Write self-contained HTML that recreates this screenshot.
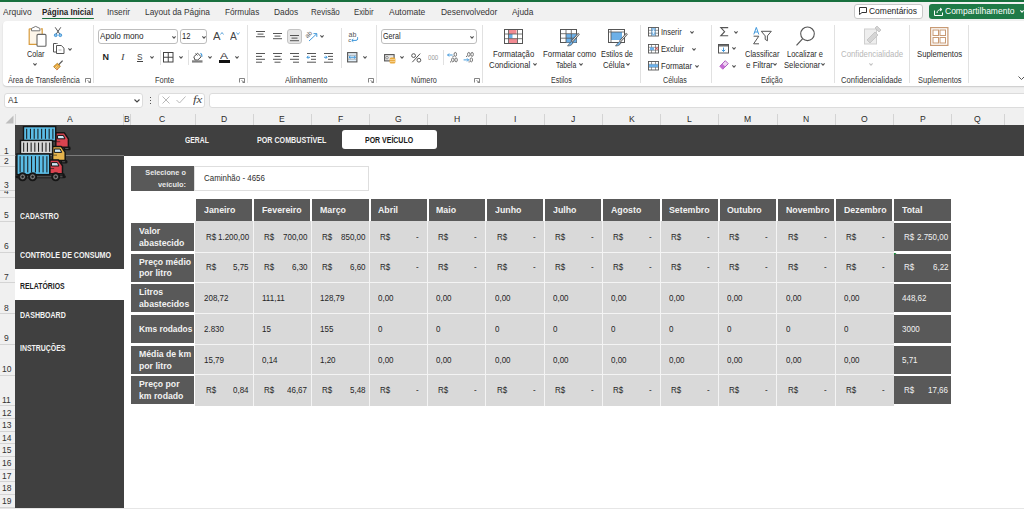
<!DOCTYPE html>
<html><head><meta charset="utf-8"><style>
html,body{margin:0;padding:0;}
body{width:1024px;height:509px;overflow:hidden;position:relative;background:#f1f1f1;font-family:"Liberation Sans",sans-serif;}
svg{overflow:visible}
</style></head><body>
<div style="position:absolute;left:0px;top:0px;width:1024px;height:2px;background:#18703e;"></div><div style="position:absolute;left:3.40px;top:7.50px;font-size:9px;line-height:9px;color:#363636;font-weight:normal;white-space:pre;transform:scaleX(0.9372);transform-origin:0 0;">Arquivo</div><div style="position:absolute;left:42.20px;top:7.50px;font-size:9px;line-height:9px;color:#242424;font-weight:bold;white-space:pre;transform:scaleX(0.8901);transform-origin:0 0;">Página Inicial</div><div style="position:absolute;left:106.70px;top:7.50px;font-size:9px;line-height:9px;color:#363636;font-weight:normal;white-space:pre;transform:scaleX(0.9198);transform-origin:0 0;">Inserir</div><div style="position:absolute;left:144.70px;top:7.50px;font-size:9px;line-height:9px;color:#363636;font-weight:normal;white-space:pre;transform:scaleX(0.9278);transform-origin:0 0;">Layout da Página</div><div style="position:absolute;left:225.20px;top:7.50px;font-size:9px;line-height:9px;color:#363636;font-weight:normal;white-space:pre;transform:scaleX(0.9145);transform-origin:0 0;">Fórmulas</div><div style="position:absolute;left:273.60px;top:7.50px;font-size:9px;line-height:9px;color:#363636;font-weight:normal;white-space:pre;transform:scaleX(0.9302);transform-origin:0 0;">Dados</div><div style="position:absolute;left:311.00px;top:7.50px;font-size:9px;line-height:9px;color:#363636;font-weight:normal;white-space:pre;transform:scaleX(0.8857);transform-origin:0 0;">Revisão</div><div style="position:absolute;left:353.90px;top:7.50px;font-size:9px;line-height:9px;color:#363636;font-weight:normal;white-space:pre;transform:scaleX(0.8665);transform-origin:0 0;">Exibir</div><div style="position:absolute;left:388.75px;top:7.50px;font-size:9px;line-height:9px;color:#363636;font-weight:normal;white-space:pre;transform:scaleX(0.9410);transform-origin:0 0;">Automate</div><div style="position:absolute;left:440.60px;top:7.50px;font-size:9px;line-height:9px;color:#363636;font-weight:normal;white-space:pre;transform:scaleX(0.9378);transform-origin:0 0;">Desenvolvedor</div><div style="position:absolute;left:511.60px;top:7.50px;font-size:9px;line-height:9px;color:#363636;font-weight:normal;white-space:pre;transform:scaleX(0.9297);transform-origin:0 0;">Ajuda</div><div style="position:absolute;left:42px;top:17.5px;width:52px;height:1.4px;background:#18703e;border-radius:1px"></div><div style="position:absolute;left:853.7px;top:3.5px;width:69.7px;height:15px;background:#ffffff;border:1px solid #c8c8c8;border-radius:3px;box-sizing:border-box"></div><div style="position:absolute;left:869.00px;top:6.70px;font-size:9px;line-height:9px;color:#242424;font-weight:normal;white-space:pre;transform:scaleX(0.9408);transform-origin:0 0;">Comentários</div><svg style="position:absolute;left:859px;top:7px" width="8" height="8" viewBox="0 0 8 8" fill="none"><path d="M0.5 0.5h7v5h-4.5l-2.5 2v-2h0z" stroke="#333" stroke-width="1"/></svg><div style="position:absolute;left:929.2px;top:3.5px;width:100px;height:15px;background:#1f7a47;border-radius:3px"></div><div style="position:absolute;left:945.00px;top:6.70px;font-size:9px;line-height:9px;color:#ffffff;font-weight:normal;white-space:pre;transform:scaleX(0.9451);transform-origin:0 0;">Compartilhamento</div><svg style="position:absolute;left:1019.5px;top:10px" width="4" height="2.5" viewBox="0 0 4 2.5" fill="none"><path d="M0.4 0.4l1.6 1.7l1.6-1.7" stroke="#fff" stroke-width="1.1"/></svg><svg style="position:absolute;left:933.6px;top:6.5px" width="9" height="9" viewBox="0 0 9 9" fill="none"><path d="M0.5 3.5v5h8v-3" stroke="#fff" stroke-width="1"/><path d="M3 6c0-2.5 2-3.5 4.5-3.5M6 1l2 1.5l-2 1.5" stroke="#fff" stroke-width="1"/></svg><div style="position:absolute;left:3px;top:21px;width:1024px;height:64.5px;background:#ffffff;border-radius:4px 0 0 4px;box-shadow:0 1px 1.5px rgba(0,0,0,0.16)"></div><div style="position:absolute;left:92.6px;top:24.5px;width:1px;height:58px;background:#e1e1e1;"></div><div style="position:absolute;left:246.7px;top:24.5px;width:1px;height:58px;background:#e1e1e1;"></div><div style="position:absolute;left:375.6px;top:24.5px;width:1px;height:58px;background:#e1e1e1;"></div><div style="position:absolute;left:481.7px;top:24.5px;width:1px;height:58px;background:#e1e1e1;"></div><div style="position:absolute;left:639.7px;top:24.5px;width:1px;height:58px;background:#e1e1e1;"></div><div style="position:absolute;left:710.5px;top:24.5px;width:1px;height:58px;background:#e1e1e1;"></div><div style="position:absolute;left:834px;top:24.5px;width:1px;height:58px;background:#e1e1e1;"></div><div style="position:absolute;left:909.2px;top:24.5px;width:1px;height:58px;background:#e1e1e1;"></div><div style="position:absolute;left:967.8px;top:24.5px;width:1px;height:58px;background:#e1e1e1;"></div><div style="position:absolute;left:7.70px;top:75.55px;font-size:8.5px;line-height:8.5px;color:#363636;font-weight:normal;white-space:pre;transform:scaleX(0.8582);transform-origin:0 0;">Área de Transferência</div><div style="position:absolute;left:155.30px;top:75.55px;font-size:8.5px;line-height:8.5px;color:#363636;font-weight:normal;white-space:pre;transform:scaleX(0.8787);transform-origin:0 0;">Fonte</div><div style="position:absolute;left:285.00px;top:75.55px;font-size:8.5px;line-height:8.5px;color:#363636;font-weight:normal;white-space:pre;transform:scaleX(0.8994);transform-origin:0 0;">Alinhamento</div><div style="position:absolute;left:411.00px;top:75.55px;font-size:8.5px;line-height:8.5px;color:#363636;font-weight:normal;white-space:pre;transform:scaleX(0.8567);transform-origin:0 0;">Número</div><div style="position:absolute;left:550.60px;top:75.55px;font-size:8.5px;line-height:8.5px;color:#363636;font-weight:normal;white-space:pre;transform:scaleX(0.8308);transform-origin:0 0;">Estilos</div><div style="position:absolute;left:662.80px;top:75.55px;font-size:8.5px;line-height:8.5px;color:#363636;font-weight:normal;white-space:pre;transform:scaleX(0.8396);transform-origin:0 0;">Células</div><div style="position:absolute;left:761.00px;top:75.55px;font-size:8.5px;line-height:8.5px;color:#363636;font-weight:normal;white-space:pre;transform:scaleX(0.8388);transform-origin:0 0;">Edição</div><div style="position:absolute;left:841.00px;top:75.55px;font-size:8.5px;line-height:8.5px;color:#363636;font-weight:normal;white-space:pre;transform:scaleX(0.9027);transform-origin:0 0;">Confidencialidade</div><div style="position:absolute;left:917.60px;top:75.55px;font-size:8.5px;line-height:8.5px;color:#363636;font-weight:normal;white-space:pre;transform:scaleX(0.8788);transform-origin:0 0;">Suplementos</div><svg style="position:absolute;left:27.5px;top:26.3px" width="19" height="21" viewBox="0 0 19 21" fill="none">
<path d="M1.2 2.8h2.8M12.8 2.8h1.4v15.6h-13v-15.6" stroke="#d89b3c" stroke-width="1.2" fill="#fdf6ea"/>
<path d="M3.5 4.8v-2.4l4.2-2l4.2 2v2.4z" fill="#fff" stroke="#777" stroke-width="1"/>
<rect x="9" y="8.4" width="9" height="11.8" rx="1" fill="#fff" stroke="#666" stroke-width="1.1"/>
</svg><div style="position:absolute;left:26.85px;top:50.30px;font-size:9px;line-height:9px;color:#2b2b2b;font-weight:normal;white-space:pre;transform:scaleX(0.8137);transform-origin:0 0;">Colar</div><svg style="position:absolute;left:33.1px;top:62.8px" width="4" height="2.5" viewBox="0 0 4 2.5" fill="none"><path d="M0.4 0.4l1.6 1.7l1.6-1.7" stroke="#555" stroke-width="1.1"/></svg><svg style="position:absolute;left:54.2px;top:26.6px" width="8" height="10" viewBox="0 0 8 10" fill="none"><path d="M1.2 0.3l4.6 6.8M6.8 0.3l-4.6 6.8" stroke="#555" stroke-width="1"/><circle cx="1.7" cy="8.2" r="1.4" fill="#8ec5ee" stroke="#3a8fd0" stroke-width="0.9"/><circle cx="6.3" cy="8.2" r="1.4" fill="#8ec5ee" stroke="#3a8fd0" stroke-width="0.9"/></svg><svg style="position:absolute;left:52.7px;top:42.9px" width="12" height="11" viewBox="0 0 12 11" fill="none"><path d="M3.5 0.5h-3v8.5h2.5" stroke="#555" stroke-width="1"/><path d="M3.5 0.5h1" stroke="#555" stroke-width="1"/><path d="M3.5 2.5h4.8l2.7 2.7v5.3h-7.5z" fill="#fff" stroke="#555" stroke-width="1"/><path d="M5.5 7h3" stroke="#999" stroke-width="0.7"/></svg><svg style="position:absolute;left:68px;top:47.599999999999994px" width="4" height="2.5" viewBox="0 0 4 2.5" fill="none"><path d="M0.4 0.4l1.6 1.7l1.6-1.7" stroke="#555" stroke-width="1.1"/></svg><svg style="position:absolute;left:53.2px;top:59.8px" width="11" height="10" viewBox="0 0 11 10" fill="none"><path d="M0.6 6.6l3.8-3.4l3 3.2l-3.6 3.4z" fill="#e9a93a" stroke="#b07a22" stroke-width="0.8"/><path d="M2 8l2.4-2.2M3.3 9l2.3-2.2" stroke="#fff" stroke-width="0.5"/><path d="M5.8 4.6l3.8-4" stroke="#555" stroke-width="1.3"/><circle cx="4.3" cy="9.2" r="0.5" fill="#e04050"/></svg><svg style="position:absolute;left:84.8px;top:77.5px" width="6" height="5" viewBox="0 0 6 5" fill="none"><path d="M0.5 4.5v-4h5v4h-2" stroke="#666" stroke-width="0.8"/><path d="M2.5 2.5l3 2" stroke="#666" stroke-width="0.8"/></svg><svg style="position:absolute;left:239.2px;top:77.5px" width="6" height="5" viewBox="0 0 6 5" fill="none"><path d="M0.5 4.5v-4h5v4h-2" stroke="#666" stroke-width="0.8"/><path d="M2.5 2.5l3 2" stroke="#666" stroke-width="0.8"/></svg><svg style="position:absolute;left:368px;top:77.5px" width="6" height="5" viewBox="0 0 6 5" fill="none"><path d="M0.5 4.5v-4h5v4h-2" stroke="#666" stroke-width="0.8"/><path d="M2.5 2.5l3 2" stroke="#666" stroke-width="0.8"/></svg><svg style="position:absolute;left:474.4px;top:77.5px" width="6" height="5" viewBox="0 0 6 5" fill="none"><path d="M0.5 4.5v-4h5v4h-2" stroke="#666" stroke-width="0.8"/><path d="M2.5 2.5l3 2" stroke="#666" stroke-width="0.8"/></svg><div style="position:absolute;left:98.1px;top:28.6px;width:80.2px;height:15.9px;background:#fff;border:1px solid #bdbdbd;border-radius:3px;box-sizing:border-box"></div><div style="position:absolute;left:99.90px;top:31.70px;font-size:9px;line-height:9px;color:#262626;font-weight:normal;white-space:pre;transform:scaleX(0.9077);transform-origin:0 0;">Apolo mono</div><svg style="position:absolute;left:172.4px;top:36.3px" width="4" height="2.5" viewBox="0 0 4 2.5" fill="none"><path d="M0.4 0.4l1.6 1.7l1.6-1.7" stroke="#555" stroke-width="1.1"/></svg><div style="position:absolute;left:180.3px;top:28.6px;width:27.2px;height:15.9px;background:#fff;border:1px solid #bdbdbd;border-radius:3px;box-sizing:border-box"></div><div style="position:absolute;left:181.80px;top:31.70px;font-size:9px;line-height:9px;color:#262626;font-weight:normal;white-space:pre;transform:scaleX(0.8491);transform-origin:0 0;">12</div><svg style="position:absolute;left:201.75px;top:36.3px" width="4" height="2.5" viewBox="0 0 4 2.5" fill="none"><path d="M0.4 0.4l1.6 1.7l1.6-1.7" stroke="#555" stroke-width="1.1"/></svg><div style="position:absolute;left:212.70px;top:30.90px;font-size:11px;line-height:11px;color:#444;font-weight:normal;white-space:pre;transform:scaleX(1.0222);transform-origin:0 0;">A</div><svg style="position:absolute;left:219.5px;top:32px" width="4" height="3" viewBox="0 0 4 3" fill="none"><path d="M0.5 2.5l1.5-2l1.5 2" stroke="#3a8fd0" stroke-width="0.8"/></svg><div style="position:absolute;left:229.80px;top:32.00px;font-size:10px;line-height:10px;color:#444;font-weight:normal;white-space:pre;transform:scaleX(1.0195);transform-origin:0 0;">A</div><svg style="position:absolute;left:236px;top:32px" width="4" height="3" viewBox="0 0 4 3" fill="none"><path d="M0.5 0.5l1.5 2l1.5-2" stroke="#3a8fd0" stroke-width="0.8"/></svg><div style="position:absolute;left:102.50px;top:52.70px;font-size:9px;line-height:9px;color:#262626;font-weight:bold;white-space:pre;">N</div><div style="position:absolute;left:121.25px;top:52.70px;font-size:9px;line-height:9px;color:#444;font-weight:normal;white-space:pre;transform:scaleX(1.1678);transform-origin:0 0;font-style:italic;font-family:Liberation Serif">I</div><div style="position:absolute;left:137.30px;top:52.55px;font-size:8.5px;line-height:8.5px;color:#444;font-weight:normal;white-space:pre;transform:scaleX(0.9701);transform-origin:0 0;">S</div><div style="position:absolute;left:137.3px;top:61px;width:5.5px;height:0.8px;background:#444;"></div><svg style="position:absolute;left:150.2px;top:56.3px" width="4" height="2.5" viewBox="0 0 4 2.5" fill="none"><path d="M0.4 0.4l1.6 1.7l1.6-1.7" stroke="#555" stroke-width="1.1"/></svg><div style="position:absolute;left:159.5px;top:49.7px;width:1px;height:15.6px;background:#e1e1e1;"></div><svg style="position:absolute;left:163.4px;top:52px" width="10.5" height="10.5" viewBox="0 0 10.5 10.5" fill="none"><rect x="0.5" y="0.5" width="9.5" height="9.5" stroke="#444" stroke-width="1"/><path d="M5.25 0.5v9.5M0.5 5.25h9.5" stroke="#444" stroke-width="1"/></svg><svg style="position:absolute;left:179px;top:56.3px" width="4" height="2.5" viewBox="0 0 4 2.5" fill="none"><path d="M0.4 0.4l1.6 1.7l1.6-1.7" stroke="#555" stroke-width="1.1"/></svg><div style="position:absolute;left:188.4px;top:49.7px;width:1px;height:15.6px;background:#e1e1e1;"></div><svg style="position:absolute;left:192.3px;top:52px" width="11" height="11" viewBox="0 0 11 11" fill="none"><path d="M1.8 4.8l3.8-3.6l3.6 3.6l-3.4 3.2h-2.8z" stroke="#444" stroke-width="0.95" stroke-linejoin="round"/><path d="M3.5 1.5l2 2" stroke="#444" stroke-width="0.9"/><path d="M8.6 1.2c0.9 0.8 1.6 2.2 1.3 3.5" stroke="#2f8fd8" stroke-width="1.1"/><rect x="0" y="8.3" width="10.5" height="2.3" fill="#808080"/></svg><svg style="position:absolute;left:207.5px;top:56.3px" width="4" height="2.5" viewBox="0 0 4 2.5" fill="none"><path d="M0.4 0.4l1.6 1.7l1.6-1.7" stroke="#555" stroke-width="1.1"/></svg><div style="position:absolute;left:220.00px;top:51.25px;font-size:9.5px;line-height:9.5px;color:#333;font-weight:normal;white-space:pre;transform:scaleX(1.2625);transform-origin:0 0;">A</div><div style="position:absolute;left:219.4px;top:60.3px;width:10.2px;height:2.3px;background:#111;"></div><svg style="position:absolute;left:234.6px;top:56.3px" width="4" height="2.5" viewBox="0 0 4 2.5" fill="none"><path d="M0.4 0.4l1.6 1.7l1.6-1.7" stroke="#555" stroke-width="1.1"/></svg><svg style="position:absolute;left:255.6px;top:31px" width="10" height="10" viewBox="0 0 10 10" fill="none"><rect x="0" y="0.0" width="9" height="1" fill="#555"/><rect x="1.5" y="2.6" width="6" height="1" fill="#555"/><rect x="0" y="5.2" width="9" height="1" fill="#555"/></svg><svg style="position:absolute;left:272.8px;top:33px" width="10" height="10" viewBox="0 0 10 10" fill="none"><rect x="0" y="0.0" width="9" height="1" fill="#555"/><rect x="1.5" y="2.6" width="6" height="1" fill="#555"/><rect x="0" y="5.2" width="9" height="1" fill="#555"/></svg><div style="position:absolute;left:286.6px;top:28.6px;width:15.1px;height:15.6px;background:#e6e6e6;border:1px solid #c4c4c4;border-radius:3px;box-sizing:border-box"></div><svg style="position:absolute;left:289.5px;top:35px" width="10" height="10" viewBox="0 0 10 10" fill="none"><rect x="0" y="0.0" width="9" height="1" fill="#555"/><rect x="1.5" y="2.6" width="6" height="1" fill="#555"/><rect x="0" y="5.2" width="9" height="1" fill="#555"/></svg><svg style="position:absolute;left:306px;top:30.5px" width="12" height="11" viewBox="0 0 12 11" fill="none"><text x="0" y="0" font-size="6.5" fill="#555" font-family="Liberation Sans" transform="translate(1.5,7.5) rotate(-45)">ab</text><path d="M3 10l7.5-7M7.5 2.6h3.3v3.3" stroke="#2f8fd8" stroke-width="0.9"/></svg><svg style="position:absolute;left:320.3px;top:35.3px" width="4" height="2.5" viewBox="0 0 4 2.5" fill="none"><path d="M0.4 0.4l1.6 1.7l1.6-1.7" stroke="#555" stroke-width="1.1"/></svg><svg style="position:absolute;left:255.6px;top:52.8px" width="10" height="10" viewBox="0 0 10 10" fill="none"><rect x="0" y="0.0" width="9" height="1" fill="#555"/><rect x="0" y="2.9" width="6" height="1" fill="#555"/><rect x="0" y="5.8" width="9" height="1" fill="#555"/><rect x="0" y="8.7" width="6" height="1" fill="#555"/></svg><svg style="position:absolute;left:272.8px;top:52.8px" width="10" height="10" viewBox="0 0 10 10" fill="none"><rect x="0" y="0.0" width="9" height="1" fill="#555"/><rect x="1.5" y="2.9" width="6" height="1" fill="#555"/><rect x="0" y="5.8" width="9" height="1" fill="#555"/><rect x="1.5" y="8.7" width="6" height="1" fill="#555"/></svg><svg style="position:absolute;left:289.7px;top:52.8px" width="10" height="10" viewBox="0 0 10 10" fill="none"><rect x="0" y="0.0" width="9" height="1" fill="#555"/><rect x="3" y="2.9" width="6" height="1" fill="#555"/><rect x="0" y="5.8" width="9" height="1" fill="#555"/><rect x="3" y="8.7" width="6" height="1" fill="#555"/></svg><svg style="position:absolute;left:306.9px;top:52.8px" width="10" height="10" viewBox="0 0 10 10" fill="none"><rect x="0" y="0" width="9" height="1" fill="#555"/><rect x="4" y="2.9" width="5" height="1" fill="#555"/><rect x="4" y="5.8" width="5" height="1" fill="#555"/><rect x="0" y="8.7" width="9" height="1" fill="#555"/><path d="M3 4.3h-3M1.3 2.8l-1.3 1.5l1.3 1.5" stroke="#2f8fd8" stroke-width="0.9"/></svg><svg style="position:absolute;left:323.6px;top:52.8px" width="10" height="10" viewBox="0 0 10 10" fill="none"><rect x="0" y="0" width="9" height="1" fill="#555"/><rect x="4" y="2.9" width="5" height="1" fill="#555"/><rect x="4" y="5.8" width="5" height="1" fill="#555"/><rect x="0" y="8.7" width="9" height="1" fill="#555"/><path d="M0 4.3h3M1.7 2.8l1.3 1.5l-1.3 1.5" stroke="#2f8fd8" stroke-width="0.9"/></svg><div style="position:absolute;left:340.8px;top:27.8px;width:1px;height:40.6px;background:#e1e1e1;"></div><svg style="position:absolute;left:348px;top:31.5px" width="11" height="11" viewBox="0 0 11 11" fill="none"><text x="0.5" y="5.2" font-size="7" fill="#555" font-family="Liberation Sans">ab</text><text x="0.3" y="9.6" font-size="6" fill="#555" font-family="Liberation Sans">c</text><path d="M9.6 5.2v1.6a1.6 1.6 0 0 1 -1.6 1.6h-4M5.3 7l-1.5 1.4l1.5 1.4" stroke="#2f8fd8" stroke-width="0.95"/></svg><svg style="position:absolute;left:347px;top:52px" width="10.5" height="10.5" viewBox="0 0 10.5 10.5" fill="none"><rect x="0.6" y="0.6" width="9.3" height="9.3" stroke="#555" stroke-width="1.1" fill="#e3f0fa"/><path d="M0.6 3.3h9.3M0.6 7.2h9.3" stroke="#888" stroke-width="0.6"/><path d="M2 5.25h6.5M3.4 4l-1.4 1.25l1.4 1.25M7.1 4l1.4 1.25l-1.4 1.25" stroke="#2f8fd8" stroke-width="0.9"/></svg><svg style="position:absolute;left:362.5px;top:56.3px" width="4" height="2.5" viewBox="0 0 4 2.5" fill="none"><path d="M0.4 0.4l1.6 1.7l1.6-1.7" stroke="#555" stroke-width="1.1"/></svg><div style="position:absolute;left:381.25px;top:28.6px;width:95.5px;height:15.9px;background:#fff;border:1px solid #bdbdbd;border-radius:3px;box-sizing:border-box"></div><div style="position:absolute;left:383.40px;top:31.70px;font-size:9px;line-height:9px;color:#262626;font-weight:normal;white-space:pre;transform:scaleX(0.7952);transform-origin:0 0;">Geral</div><svg style="position:absolute;left:470.3px;top:36.3px" width="4" height="2.5" viewBox="0 0 4 2.5" fill="none"><path d="M0.4 0.4l1.6 1.7l1.6-1.7" stroke="#555" stroke-width="1.1"/></svg><svg style="position:absolute;left:384px;top:53.6px" width="12" height="10" viewBox="0 0 12 10" fill="none"><rect x="0.6" y="0.6" width="9.5" height="6.3" stroke="#555" stroke-width="1.1" fill="#e8e8e8"/><circle cx="3" cy="3.7" r="1.3" stroke="#777" stroke-width="0.7"/><rect x="5.6" y="3.6" width="5.8" height="6" rx="1.5" fill="#e9a93a"/><path d="M6 5.6h5M6 7.6h5" stroke="#fbe3b8" stroke-width="0.7"/></svg><svg style="position:absolute;left:399.7px;top:56.3px" width="4" height="2.5" viewBox="0 0 4 2.5" fill="none"><path d="M0.4 0.4l1.6 1.7l1.6-1.7" stroke="#555" stroke-width="1.1"/></svg><svg style="position:absolute;left:411px;top:52.8px" width="10.5" height="9.8" viewBox="0 0 10.5 9.8" fill="none"><circle cx="2.6" cy="2.6" r="1.9" stroke="#555" stroke-width="1"/><circle cx="7.9" cy="7.2" r="1.9" stroke="#555" stroke-width="1"/><path d="M9.2 0.6L1.3 9.2" stroke="#555" stroke-width="1"/></svg><div style="position:absolute;left:427.80px;top:53.85px;font-size:7.5px;line-height:7.5px;color:#999;font-weight:normal;white-space:pre;transform:scaleX(0.8151);transform-origin:0 0;">000</div><div style="position:absolute;left:442.7px;top:50px;width:1px;height:15.3px;background:#e1e1e1;"></div><svg style="position:absolute;left:446.6px;top:52.3px" width="11" height="10.5" viewBox="0 0 11 10.5" fill="none"><ellipse cx="8.3" cy="2.4" rx="1.25" ry="2" stroke="#555" stroke-width="0.8"/><rect x="5.6" y="3.9" width="1" height="1" fill="#555"/><ellipse cx="5.8" cy="7.9" rx="1.25" ry="2" stroke="#555" stroke-width="0.8"/><ellipse cx="9.1" cy="7.9" rx="1.25" ry="2" stroke="#555" stroke-width="0.8"/><rect x="3.1" y="9.4" width="1" height="1" fill="#555"/><path d="M0.6 3h5M2.1 1.5l-1.5 1.5l1.5 1.5" stroke="#2f8fd8" stroke-width="0.9"/></svg><svg style="position:absolute;left:463.4px;top:52.3px" width="11" height="10.5" viewBox="0 0 11 10.5" fill="none"><ellipse cx="5.8" cy="2.4" rx="1.25" ry="2" stroke="#555" stroke-width="0.8"/><ellipse cx="9.1" cy="2.4" rx="1.25" ry="2" stroke="#555" stroke-width="0.8"/><rect x="3.1" y="3.9" width="1" height="1" fill="#555"/><ellipse cx="8.3" cy="7.9" rx="1.25" ry="2" stroke="#555" stroke-width="0.8"/><rect x="5.6" y="9.4" width="1" height="1" fill="#555"/><path d="M0.6 7.9h5M4.1 6.4l1.5 1.5l-1.5 1.5" stroke="#2f8fd8" stroke-width="0.9"/></svg><svg style="position:absolute;left:504px;top:28.6px" width="19" height="15" viewBox="0 0 19 15" fill="none">
<rect x="0.5" y="0.5" width="18" height="14" fill="#fff" stroke="#555" stroke-width="1"/>
<rect x="4.5" y="1" width="8" height="4" fill="#f28b93"/>
<rect x="4.5" y="5" width="4" height="4.5" fill="#6cb0e8"/>
<rect x="4.5" y="9.5" width="9" height="4.5" fill="#f28b93"/>
<path d="M4.5 0.5v14M13.5 0.5v14M0.5 5h18M0.5 9.7h18" stroke="#555" stroke-width="0.8"/>
</svg><div style="position:absolute;left:492.80px;top:49.70px;font-size:9px;line-height:9px;color:#2b2b2b;font-weight:normal;white-space:pre;transform:scaleX(0.8580);transform-origin:0 0;">Formatação</div><div style="position:absolute;left:489.00px;top:60.50px;font-size:9px;line-height:9px;color:#2b2b2b;font-weight:normal;white-space:pre;transform:scaleX(0.8782);transform-origin:0 0;">Condicional</div><svg style="position:absolute;left:532.7px;top:63.39999999999999px" width="4" height="2.5" viewBox="0 0 4 2.5" fill="none"><path d="M0.4 0.4l1.6 1.7l1.6-1.7" stroke="#555" stroke-width="1.1"/></svg><svg style="position:absolute;left:560px;top:28.6px" width="20" height="18" viewBox="0 0 20 18" fill="none">
<rect x="0.5" y="0.5" width="16" height="13" fill="#fff" stroke="#555" stroke-width="1"/>
<rect x="6" y="5" width="10.5" height="8.5" fill="#6cb0e8"/>
<path d="M0.5 4.7h16M0.5 9.2h16M6 0.5v13M11.3 0.5v13" stroke="#555" stroke-width="0.8"/>
<path d="M19 4.5l-7 8" stroke="#555" stroke-width="2.2"/><path d="M19 4.5l-7 8" stroke="#fff" stroke-width="0.9"/>
<path d="M11.5 12.5c-1.5 1-2.5 2.5-4 4.5c2.5 0 4.5-1 5.5-3z" fill="#6cb0e8" stroke="#555" stroke-width="0.7"/>
</svg><div style="position:absolute;left:542.80px;top:49.70px;font-size:9px;line-height:9px;color:#2b2b2b;font-weight:normal;white-space:pre;transform:scaleX(0.8719);transform-origin:0 0;">Formatar como</div><div style="position:absolute;left:555.80px;top:60.50px;font-size:9px;line-height:9px;color:#2b2b2b;font-weight:normal;white-space:pre;transform:scaleX(0.7617);transform-origin:0 0;">Tabela</div><svg style="position:absolute;left:578.8px;top:63.39999999999999px" width="4" height="2.5" viewBox="0 0 4 2.5" fill="none"><path d="M0.4 0.4l1.6 1.7l1.6-1.7" stroke="#555" stroke-width="1.1"/></svg><svg style="position:absolute;left:608px;top:28.6px" width="20" height="18" viewBox="0 0 20 18" fill="none">
<rect x="0.5" y="0.5" width="16" height="13" fill="#fff" stroke="#555" stroke-width="1"/>
<rect x="3" y="3" width="11" height="8" fill="#6cb0e8"/>
<path d="M0.5 3h16M3 0.5v13" stroke="#555" stroke-width="0.8"/>
<path d="M19 4.5l-7 8" stroke="#555" stroke-width="2.2"/><path d="M19 4.5l-7 8" stroke="#fff" stroke-width="0.9"/>
<path d="M11.5 12.5c-1.5 1-2.5 2.5-4 4.5c2.5 0 4.5-1 5.5-3z" fill="#6cb0e8" stroke="#555" stroke-width="0.7"/>
</svg><div style="position:absolute;left:601.00px;top:49.70px;font-size:9px;line-height:9px;color:#2b2b2b;font-weight:normal;white-space:pre;transform:scaleX(0.8150);transform-origin:0 0;">Estilos de</div><div style="position:absolute;left:602.70px;top:60.50px;font-size:9px;line-height:9px;color:#2b2b2b;font-weight:normal;white-space:pre;transform:scaleX(0.8544);transform-origin:0 0;">Célula</div><svg style="position:absolute;left:626px;top:63.39999999999999px" width="4" height="2.5" viewBox="0 0 4 2.5" fill="none"><path d="M0.4 0.4l1.6 1.7l1.6-1.7" stroke="#555" stroke-width="1.1"/></svg><svg style="position:absolute;left:647.5px;top:26.5px" width="11" height="10" viewBox="0 0 11 10" fill="none"><rect x="0.5" y="0.5" width="10" height="8.5" fill="#fff" stroke="#555" stroke-width="0.9"/><path d="M3.5 0.5v8.5M7.5 0.5v8.5M0.5 3.3h10M0.5 6.2h10" stroke="#555" stroke-width="0.6"/><rect x="3.5" y="1" width="4" height="7.5" fill="#6cb0e8" opacity="0.8"/><path d="M5.5 2.5v4.5M3.8 4.8h3.4" stroke="#fff" stroke-width="0.8"/></svg><div style="position:absolute;left:661.00px;top:27.70px;font-size:9px;line-height:9px;color:#2b2b2b;font-weight:normal;white-space:pre;transform:scaleX(0.8238);transform-origin:0 0;">Inserir</div><svg style="position:absolute;left:690px;top:30.8px" width="4" height="2.5" viewBox="0 0 4 2.5" fill="none"><path d="M0.4 0.4l1.6 1.7l1.6-1.7" stroke="#555" stroke-width="1.1"/></svg><svg style="position:absolute;left:647.5px;top:43.5px" width="11" height="10" viewBox="0 0 11 10" fill="none"><rect x="0.5" y="0.5" width="10" height="8.5" fill="#fff" stroke="#555" stroke-width="0.9"/><path d="M3.5 0.5v8.5M7.5 0.5v8.5M0.5 3.3h10M0.5 6.2h10" stroke="#555" stroke-width="0.6"/><rect x="2" y="3.3" width="4" height="2.9" fill="#6cb0e8"/><path d="M7.5 3.3l2.5 2.5M10 3.3l-2.5 2.5" stroke="#e03a3a" stroke-width="0.9"/></svg><div style="position:absolute;left:661.00px;top:44.90px;font-size:9px;line-height:9px;color:#2b2b2b;font-weight:normal;white-space:pre;transform:scaleX(0.8517);transform-origin:0 0;">Excluir</div><svg style="position:absolute;left:692px;top:47.8px" width="4" height="2.5" viewBox="0 0 4 2.5" fill="none"><path d="M0.4 0.4l1.6 1.7l1.6-1.7" stroke="#555" stroke-width="1.1"/></svg><svg style="position:absolute;left:647.5px;top:60.5px" width="11" height="10" viewBox="0 0 11 10" fill="none"><rect x="0.5" y="0.5" width="10" height="8.5" fill="#fff" stroke="#555" stroke-width="0.9"/><path d="M3.5 0.5v8.5M7.5 0.5v8.5M0.5 3.3h10M0.5 6.2h10" stroke="#555" stroke-width="0.6"/><rect x="1" y="3.3" width="9" height="2.9" fill="#6cb0e8"/></svg><div style="position:absolute;left:661.00px;top:61.80px;font-size:9px;line-height:9px;color:#2b2b2b;font-weight:normal;white-space:pre;transform:scaleX(0.8492);transform-origin:0 0;">Formatar</div><svg style="position:absolute;left:694.9px;top:64.6px" width="4" height="2.5" viewBox="0 0 4 2.5" fill="none"><path d="M0.4 0.4l1.6 1.7l1.6-1.7" stroke="#555" stroke-width="1.1"/></svg><svg style="position:absolute;left:719.6px;top:26.6px" width="8.5" height="9.5" viewBox="0 0 8.5 9.5" fill="none"><path d="M8.2 0.6H0.8L4.6 4.7L0.8 8.8H8.2" stroke="#555" stroke-width="1.1" stroke-linejoin="miter"/></svg><svg style="position:absolute;left:734px;top:30.8px" width="4" height="2.5" viewBox="0 0 4 2.5" fill="none"><path d="M0.4 0.4l1.6 1.7l1.6-1.7" stroke="#555" stroke-width="1.1"/></svg><svg style="position:absolute;left:718.1px;top:43.5px" width="11" height="9.5" viewBox="0 0 11 9.5" fill="none"><rect x="0.5" y="0.5" width="10" height="8.5" fill="#fff" stroke="#555" stroke-width="1"/><path d="M0.5 1.8h10" stroke="#555" stroke-width="1.3"/><path d="M5.5 3.5v4M3.8 5.8l1.7 1.7l1.7-1.7" stroke="#2f8fd8" stroke-width="0.9"/></svg><svg style="position:absolute;left:732.4px;top:47.3px" width="4" height="2.5" viewBox="0 0 4 2.5" fill="none"><path d="M0.4 0.4l1.6 1.7l1.6-1.7" stroke="#555" stroke-width="1.1"/></svg><svg style="position:absolute;left:718.6px;top:60.3px" width="10" height="10" viewBox="0 0 10 10" fill="none"><path d="M0.8 6.2l5.5-5.5l3 3l-5.5 5.5z" fill="#ecd3f0" stroke="#b05cc0" stroke-width="1"/><path d="M0.8 6.2l3 3l2.5-2.5l-3-3z" fill="#c46ad3"/></svg><svg style="position:absolute;left:732.4px;top:65.3px" width="4" height="2.5" viewBox="0 0 4 2.5" fill="none"><path d="M0.4 0.4l1.6 1.7l1.6-1.7" stroke="#555" stroke-width="1.1"/></svg><svg style="position:absolute;left:753px;top:27.4px" width="19" height="17.5" viewBox="0 0 19 17.5" fill="none">
<path d="M0.8 7.4L3.3 0.4L5.8 7.4M1.7 5h3.2" stroke="#2f8fd8" stroke-width="0.9"/>
<path d="M0.6 9.2H5.8L0.6 16.8H6" stroke="#555" stroke-width="1"/>
<path d="M8.3 4.3h10l-3.9 4.6v4.9l-2.2 -1.4v-3.5z" stroke="#555" stroke-width="1" fill="#fff" stroke-linejoin="round"/>
</svg><div style="position:absolute;left:744.80px;top:49.70px;font-size:9px;line-height:9px;color:#2b2b2b;font-weight:normal;white-space:pre;transform:scaleX(0.8288);transform-origin:0 0;">Classificar</div><div style="position:absolute;left:746.00px;top:60.50px;font-size:9px;line-height:9px;color:#2b2b2b;font-weight:normal;white-space:pre;transform:scaleX(0.8852);transform-origin:0 0;">e Filtrar</div><svg style="position:absolute;left:773.3px;top:63.39999999999999px" width="4" height="2.5" viewBox="0 0 4 2.5" fill="none"><path d="M0.4 0.4l1.6 1.7l1.6-1.7" stroke="#555" stroke-width="1.1"/></svg><svg style="position:absolute;left:795.6px;top:26.25px" width="20" height="20" viewBox="0 0 20 20" fill="none"><circle cx="11.5" cy="7.8" r="6.8" stroke="#555" stroke-width="1.1" fill="#fff"/><path d="M6.5 12.8l-6 6.5" stroke="#555" stroke-width="1.2"/></svg><div style="position:absolute;left:787.00px;top:49.70px;font-size:9px;line-height:9px;color:#2b2b2b;font-weight:normal;white-space:pre;transform:scaleX(0.8271);transform-origin:0 0;">Localizar e</div><div style="position:absolute;left:784.00px;top:60.50px;font-size:9px;line-height:9px;color:#2b2b2b;font-weight:normal;white-space:pre;transform:scaleX(0.8536);transform-origin:0 0;">Selecionar</div><svg style="position:absolute;left:821.4px;top:63.39999999999999px" width="4" height="2.5" viewBox="0 0 4 2.5" fill="none"><path d="M0.4 0.4l1.6 1.7l1.6-1.7" stroke="#555" stroke-width="1.1"/></svg><svg style="position:absolute;left:864.4px;top:26px" width="18" height="19" viewBox="0 0 18 19" fill="none">
<rect x="0.5" y="3" width="12" height="15" fill="#eeeeee" stroke="#cfcfcf" stroke-width="1"/>
<path d="M3 14l8-8l3 3l-8 8z" fill="#d5d5d5" stroke="#c0c0c0" stroke-width="0.8"/>
<path d="M11 2l4 4l2-2l-4-4z" fill="#d5d5d5" stroke="#c0c0c0" stroke-width="0.8"/>
</svg><div style="position:absolute;left:840.60px;top:49.70px;font-size:9px;line-height:9px;color:#b8b8b8;font-weight:normal;white-space:pre;transform:scaleX(0.8679);transform-origin:0 0;">Confidencialidade</div><svg style="position:absolute;left:869px;top:62.55px" width="4" height="2.5" viewBox="0 0 4 2.5" fill="none"><path d="M0.4 0.4l1.6 1.7l1.6-1.7" stroke="#c4c4c4" stroke-width="1.1"/></svg><svg style="position:absolute;left:930.3px;top:26.6px" width="18.5" height="19" viewBox="0 0 18.5 19" fill="none">
<rect x="0.6" y="0.6" width="17.3" height="17.8" fill="#fff" stroke="#c89a74" stroke-width="1.2"/>
<rect x="3" y="3" width="5.5" height="5.5" stroke="#c89a74" stroke-width="1"/>
<rect x="10" y="3" width="5.5" height="5.5" stroke="#c89a74" stroke-width="1"/>
<rect x="3" y="10.5" width="5.5" height="5.5" stroke="#c89a74" stroke-width="1"/>
<rect x="10" y="10.5" width="5.5" height="5.5" stroke="#c89a74" stroke-width="1"/>
</svg><div style="position:absolute;left:916.80px;top:49.70px;font-size:9px;line-height:9px;color:#2b2b2b;font-weight:normal;white-space:pre;transform:scaleX(0.8585);transform-origin:0 0;">Suplementos</div><svg style="position:absolute;left:1018px;top:76px" width="6" height="4" viewBox="0 0 6 4" fill="none"><path d="M0.5 0.5l3 3l3-3" stroke="#555" stroke-width="1"/></svg><div style="position:absolute;left:4px;top:92.5px;width:139px;height:15.3px;background:#fff;border:1px solid #dcdcdc;border-radius:3px;box-sizing:border-box"></div><div style="position:absolute;left:7.90px;top:95.75px;font-size:8.5px;line-height:8.5px;color:#333;font-weight:normal;white-space:pre;transform:scaleX(0.9618);transform-origin:0 0;">A1</div><svg style="position:absolute;left:133.5px;top:99px" width="6" height="3.5" viewBox="0 0 6 3.5" fill="none"><path d="M0.5 0.5l2.5 2.5l2.5-2.5" stroke="#444" stroke-width="1.1"/></svg><div style="position:absolute;left:150.1px;top:96.5px;width:1.2px;height:1.2px;background:#555;"></div><div style="position:absolute;left:150.1px;top:99.5px;width:1.2px;height:1.2px;background:#555;"></div><div style="position:absolute;left:150.1px;top:102.5px;width:1.2px;height:1.2px;background:#555;"></div><div style="position:absolute;left:157.75px;top:92.5px;width:46.75px;height:15.3px;background:#fff;border:1px solid #dcdcdc;border-radius:3px;box-sizing:border-box"></div><svg style="position:absolute;left:161.8px;top:96px" width="8" height="8" viewBox="0 0 8 8" fill="none"><path d="M0.5 0.5l7 7M7.5 0.5l-7 7" stroke="#b8b8b8" stroke-width="1"/></svg><svg style="position:absolute;left:176.4px;top:96px" width="10" height="8" viewBox="0 0 10 8" fill="none"><path d="M0.5 4l3 3l6-6.5" stroke="#b8b8b8" stroke-width="1"/></svg><div style="position:absolute;left:192.80px;top:95.00px;font-size:10px;line-height:10px;color:#444;font-weight:normal;white-space:pre;transform:scaleX(1.3025);transform-origin:0 0;font-family:Liberation Serif;font-style:italic">fx</div><div style="position:absolute;left:209px;top:92.5px;width:820px;height:15.3px;background:#fff;border:1px solid #dcdcdc;border-radius:3px 0 0 3px;box-sizing:border-box"></div><div style="position:absolute;left:0px;top:108px;width:1024px;height:17.2px;background:#f0f0f0;"></div><div style="position:absolute;left:0px;top:125.2px;width:15px;height:384px;background:#f0f0f0;"></div><svg style="position:absolute;left:5px;top:114.5px" width="9" height="9" viewBox="0 0 9 9" fill="none"><path d="M8.5 0.5v8h-8z" fill="#bdbdbd"/></svg><div style="position:absolute;left:15px;top:125.2px;width:1009px;height:383px;background:#ffffff;"></div><div style="position:absolute;left:66.63px;top:114.65px;font-size:9.3px;line-height:9.3px;color:#2b2b2b;font-weight:normal;white-space:pre;transform:scaleX(0.9244);transform-origin:0 0;">A</div><div style="position:absolute;left:123.2px;top:113.7px;width:1px;height:11.5px;background:#d4d4d4;"></div><div style="position:absolute;left:123.98px;top:114.65px;font-size:9.3px;line-height:9.3px;color:#2b2b2b;font-weight:normal;white-space:pre;transform:scaleX(0.9244);transform-origin:0 0;">B</div><div style="position:absolute;left:129.5px;top:113.7px;width:1px;height:11.5px;background:#d4d4d4;"></div><div style="position:absolute;left:159.10px;top:114.65px;font-size:9.3px;line-height:9.3px;color:#2b2b2b;font-weight:normal;white-space:pre;transform:scaleX(0.9244);transform-origin:0 0;">C</div><div style="position:absolute;left:194.5px;top:113.7px;width:1px;height:11.5px;background:#d4d4d4;"></div><div style="position:absolute;left:220.90px;top:114.65px;font-size:9.3px;line-height:9.3px;color:#2b2b2b;font-weight:normal;white-space:pre;transform:scaleX(0.9244);transform-origin:0 0;">D</div><div style="position:absolute;left:252.70000000000002px;top:113.7px;width:1px;height:11.5px;background:#d4d4d4;"></div><div style="position:absolute;left:279.33px;top:114.65px;font-size:9.3px;line-height:9.3px;color:#2b2b2b;font-weight:normal;white-space:pre;transform:scaleX(0.9244);transform-origin:0 0;">E</div><div style="position:absolute;left:310.9px;top:113.7px;width:1px;height:11.5px;background:#d4d4d4;"></div><div style="position:absolute;left:337.78px;top:114.65px;font-size:9.3px;line-height:9.3px;color:#2b2b2b;font-weight:normal;white-space:pre;transform:scaleX(0.9244);transform-origin:0 0;">F</div><div style="position:absolute;left:369.1px;top:113.7px;width:1px;height:11.5px;background:#d4d4d4;"></div><div style="position:absolute;left:395.26px;top:114.65px;font-size:9.3px;line-height:9.3px;color:#2b2b2b;font-weight:normal;white-space:pre;transform:scaleX(0.9244);transform-origin:0 0;">G</div><div style="position:absolute;left:427.29999999999995px;top:113.7px;width:1px;height:11.5px;background:#d4d4d4;"></div><div style="position:absolute;left:453.70px;top:114.65px;font-size:9.3px;line-height:9.3px;color:#2b2b2b;font-weight:normal;white-space:pre;transform:scaleX(0.9244);transform-origin:0 0;">H</div><div style="position:absolute;left:485.5px;top:113.7px;width:1px;height:11.5px;background:#d4d4d4;"></div><div style="position:absolute;left:513.81px;top:114.65px;font-size:9.3px;line-height:9.3px;color:#2b2b2b;font-weight:normal;white-space:pre;transform:scaleX(0.9244);transform-origin:0 0;">I</div><div style="position:absolute;left:543.7px;top:113.7px;width:1px;height:11.5px;background:#d4d4d4;"></div><div style="position:absolute;left:571.05px;top:114.65px;font-size:9.3px;line-height:9.3px;color:#2b2b2b;font-weight:normal;white-space:pre;transform:scaleX(0.9244);transform-origin:0 0;">J</div><div style="position:absolute;left:601.9px;top:113.7px;width:1px;height:11.5px;background:#d4d4d4;"></div><div style="position:absolute;left:628.53px;top:114.65px;font-size:9.3px;line-height:9.3px;color:#2b2b2b;font-weight:normal;white-space:pre;transform:scaleX(0.9244);transform-origin:0 0;">K</div><div style="position:absolute;left:660.1px;top:113.7px;width:1px;height:11.5px;background:#d4d4d4;"></div><div style="position:absolute;left:687.21px;top:114.65px;font-size:9.3px;line-height:9.3px;color:#2b2b2b;font-weight:normal;white-space:pre;transform:scaleX(0.9244);transform-origin:0 0;">L</div><div style="position:absolute;left:718.3000000000001px;top:113.7px;width:1px;height:11.5px;background:#d4d4d4;"></div><div style="position:absolute;left:744.22px;top:114.65px;font-size:9.3px;line-height:9.3px;color:#2b2b2b;font-weight:normal;white-space:pre;transform:scaleX(0.9244);transform-origin:0 0;">M</div><div style="position:absolute;left:776.5px;top:113.7px;width:1px;height:11.5px;background:#d4d4d4;"></div><div style="position:absolute;left:802.90px;top:114.65px;font-size:9.3px;line-height:9.3px;color:#2b2b2b;font-weight:normal;white-space:pre;transform:scaleX(0.9244);transform-origin:0 0;">N</div><div style="position:absolute;left:834.7px;top:113.7px;width:1px;height:11.5px;background:#d4d4d4;"></div><div style="position:absolute;left:860.86px;top:114.65px;font-size:9.3px;line-height:9.3px;color:#2b2b2b;font-weight:normal;white-space:pre;transform:scaleX(0.9244);transform-origin:0 0;">O</div><div style="position:absolute;left:892.9000000000001px;top:113.7px;width:1px;height:11.5px;background:#d4d4d4;"></div><div style="position:absolute;left:919.53px;top:114.65px;font-size:9.3px;line-height:9.3px;color:#2b2b2b;font-weight:normal;white-space:pre;transform:scaleX(0.9244);transform-origin:0 0;">P</div><div style="position:absolute;left:951.1px;top:113.7px;width:1px;height:11.5px;background:#d4d4d4;"></div><div style="position:absolute;left:974.46px;top:114.65px;font-size:9.3px;line-height:9.3px;color:#2b2b2b;font-weight:normal;white-space:pre;transform:scaleX(0.9244);transform-origin:0 0;">Q</div><div style="position:absolute;left:1003.6999999999999px;top:113.7px;width:1px;height:11.5px;background:#d4d4d4;"></div><div style="position:absolute;left:15px;top:113.7px;width:1px;height:11.5px;background:#d4d4d4;"></div><div style="position:absolute;left:0;top:125.2px;width:15px;height:30.299999999999997px;overflow:hidden"><div style="position:absolute;left:4.34px;top:22.10px;font-size:9px;line-height:9px;color:#333;font-weight:normal;white-space:pre;transform:scaleX(0.9444);transform-origin:0 0;">1</div></div><div style="position:absolute;left:0px;top:155.0px;width:15px;height:1px;background:#d4d4d4;"></div><div style="position:absolute;left:0;top:155.5px;width:15px;height:10.800000000000011px;overflow:hidden"><div style="position:absolute;left:4.34px;top:1.80px;font-size:9px;line-height:9px;color:#333;font-weight:normal;white-space:pre;transform:scaleX(0.9444);transform-origin:0 0;">2</div></div><div style="position:absolute;left:0px;top:165.8px;width:15px;height:1px;background:#d4d4d4;"></div><div style="position:absolute;left:0;top:166.3px;width:15px;height:24.5px;overflow:hidden"><div style="position:absolute;left:4.34px;top:14.50px;font-size:9px;line-height:9px;color:#333;font-weight:normal;white-space:pre;transform:scaleX(0.9444);transform-origin:0 0;">3</div></div><div style="position:absolute;left:0px;top:190.3px;width:15px;height:1px;background:#d4d4d4;"></div><div style="position:absolute;left:0;top:190.8px;width:15px;height:6.199999999999989px;overflow:hidden"><div style="position:absolute;left:4.34px;top:-3.80px;font-size:9px;line-height:9px;color:#333;font-weight:normal;white-space:pre;transform:scaleX(0.9444);transform-origin:0 0;">4</div></div><div style="position:absolute;left:0px;top:196.5px;width:15px;height:1px;background:#d4d4d4;"></div><div style="position:absolute;left:0;top:197.0px;width:15px;height:24.30000000000001px;overflow:hidden"><div style="position:absolute;left:4.34px;top:14.30px;font-size:9px;line-height:9px;color:#333;font-weight:normal;white-space:pre;transform:scaleX(0.9444);transform-origin:0 0;">5</div></div><div style="position:absolute;left:0px;top:220.8px;width:15px;height:1px;background:#d4d4d4;"></div><div style="position:absolute;left:0;top:221.3px;width:15px;height:30.899999999999977px;overflow:hidden"><div style="position:absolute;left:4.34px;top:20.90px;font-size:9px;line-height:9px;color:#333;font-weight:normal;white-space:pre;transform:scaleX(0.9444);transform-origin:0 0;">6</div></div><div style="position:absolute;left:0px;top:251.7px;width:15px;height:1px;background:#d4d4d4;"></div><div style="position:absolute;left:0;top:252.2px;width:15px;height:30.69999999999999px;overflow:hidden"><div style="position:absolute;left:4.34px;top:20.70px;font-size:9px;line-height:9px;color:#333;font-weight:normal;white-space:pre;transform:scaleX(0.9444);transform-origin:0 0;">7</div></div><div style="position:absolute;left:0px;top:282.4px;width:15px;height:1px;background:#d4d4d4;"></div><div style="position:absolute;left:0;top:282.9px;width:15px;height:30.900000000000034px;overflow:hidden"><div style="position:absolute;left:4.34px;top:20.90px;font-size:9px;line-height:9px;color:#333;font-weight:normal;white-space:pre;transform:scaleX(0.9444);transform-origin:0 0;">8</div></div><div style="position:absolute;left:0px;top:313.3px;width:15px;height:1px;background:#d4d4d4;"></div><div style="position:absolute;left:0;top:313.8px;width:15px;height:30.69999999999999px;overflow:hidden"><div style="position:absolute;left:4.34px;top:20.70px;font-size:9px;line-height:9px;color:#333;font-weight:normal;white-space:pre;transform:scaleX(0.9444);transform-origin:0 0;">9</div></div><div style="position:absolute;left:0px;top:344.0px;width:15px;height:1px;background:#d4d4d4;"></div><div style="position:absolute;left:0;top:344.5px;width:15px;height:30.5px;overflow:hidden"><div style="position:absolute;left:1.97px;top:20.50px;font-size:9px;line-height:9px;color:#333;font-weight:normal;white-space:pre;transform:scaleX(0.9444);transform-origin:0 0;">10</div></div><div style="position:absolute;left:0px;top:374.5px;width:15px;height:1px;background:#d4d4d4;"></div><div style="position:absolute;left:0;top:375.0px;width:15px;height:30.80000000000001px;overflow:hidden"><div style="position:absolute;left:2.29px;top:20.80px;font-size:9px;line-height:9px;color:#333;font-weight:normal;white-space:pre;transform:scaleX(0.9444);transform-origin:0 0;">11</div></div><div style="position:absolute;left:0px;top:405.3px;width:15px;height:1px;background:#d4d4d4;"></div><div style="position:absolute;left:0;top:405.8px;width:15px;height:12.800000000000011px;overflow:hidden"><div style="position:absolute;left:1.97px;top:2.80px;font-size:9px;line-height:9px;color:#333;font-weight:normal;white-space:pre;transform:scaleX(0.9444);transform-origin:0 0;">12</div></div><div style="position:absolute;left:0px;top:418.1px;width:15px;height:1px;background:#d4d4d4;"></div><div style="position:absolute;left:0;top:418.6px;width:15px;height:12.699999999999989px;overflow:hidden"><div style="position:absolute;left:1.97px;top:2.70px;font-size:9px;line-height:9px;color:#333;font-weight:normal;white-space:pre;transform:scaleX(0.9444);transform-origin:0 0;">13</div></div><div style="position:absolute;left:0px;top:430.8px;width:15px;height:1px;background:#d4d4d4;"></div><div style="position:absolute;left:0;top:431.3px;width:15px;height:12.5px;overflow:hidden"><div style="position:absolute;left:1.97px;top:2.50px;font-size:9px;line-height:9px;color:#333;font-weight:normal;white-space:pre;transform:scaleX(0.9444);transform-origin:0 0;">14</div></div><div style="position:absolute;left:0px;top:443.3px;width:15px;height:1px;background:#d4d4d4;"></div><div style="position:absolute;left:0;top:443.8px;width:15px;height:12.5px;overflow:hidden"><div style="position:absolute;left:1.97px;top:2.50px;font-size:9px;line-height:9px;color:#333;font-weight:normal;white-space:pre;transform:scaleX(0.9444);transform-origin:0 0;">15</div></div><div style="position:absolute;left:0px;top:455.8px;width:15px;height:1px;background:#d4d4d4;"></div><div style="position:absolute;left:0;top:456.3px;width:15px;height:12.699999999999989px;overflow:hidden"><div style="position:absolute;left:1.97px;top:2.70px;font-size:9px;line-height:9px;color:#333;font-weight:normal;white-space:pre;transform:scaleX(0.9444);transform-origin:0 0;">16</div></div><div style="position:absolute;left:0px;top:468.5px;width:15px;height:1px;background:#d4d4d4;"></div><div style="position:absolute;left:0;top:469.0px;width:15px;height:12.600000000000023px;overflow:hidden"><div style="position:absolute;left:1.97px;top:2.60px;font-size:9px;line-height:9px;color:#333;font-weight:normal;white-space:pre;transform:scaleX(0.9444);transform-origin:0 0;">17</div></div><div style="position:absolute;left:0px;top:481.1px;width:15px;height:1px;background:#d4d4d4;"></div><div style="position:absolute;left:0;top:481.6px;width:15px;height:12.699999999999989px;overflow:hidden"><div style="position:absolute;left:1.97px;top:2.70px;font-size:9px;line-height:9px;color:#333;font-weight:normal;white-space:pre;transform:scaleX(0.9444);transform-origin:0 0;">18</div></div><div style="position:absolute;left:0px;top:493.8px;width:15px;height:1px;background:#d4d4d4;"></div><div style="position:absolute;left:0;top:494.3px;width:15px;height:12.699999999999989px;overflow:hidden"><div style="position:absolute;left:1.97px;top:2.70px;font-size:9px;line-height:9px;color:#333;font-weight:normal;white-space:pre;transform:scaleX(0.9444);transform-origin:0 0;">19</div></div><div style="position:absolute;left:0px;top:506.5px;width:15px;height:1px;background:#d4d4d4;"></div><div style="position:absolute;left:14.5px;top:125.2px;width:1px;height:384px;background:#d0d0d0;"></div><div style="position:absolute;left:15px;top:125.2px;width:1009px;height:30.5px;background:#404040;"></div><div style="position:absolute;left:15px;top:155.5px;width:108.7px;height:352.5px;background:#404040;"></div><div style="position:absolute;left:15px;top:155.2px;width:108.7px;height:0.8px;background:#7a7a7a;"></div><div style="position:absolute;left:15px;top:268.5px;width:108.7px;height:31px;background:#ffffff;"></div><div style="position:absolute;left:0px;top:507.6px;width:1024px;height:1.4px;background:#e6e6e6;"></div><div style="position:absolute;left:20.10px;top:212.15px;font-size:8.5px;line-height:8.5px;color:#f2f2f2;font-weight:bold;white-space:pre;transform:scaleX(0.8056);transform-origin:0 0;">CADASTRO</div><div style="position:absolute;left:20.10px;top:250.65px;font-size:8.5px;line-height:8.5px;color:#f2f2f2;font-weight:bold;white-space:pre;transform:scaleX(0.8388);transform-origin:0 0;">CONTROLE DE CONSUMO</div><div style="position:absolute;left:20.10px;top:281.85px;font-size:8.5px;line-height:8.5px;color:#1e1e1e;font-weight:bold;white-space:pre;transform:scaleX(0.8096);transform-origin:0 0;">RELATÓRIOS</div><div style="position:absolute;left:20.10px;top:310.65px;font-size:8.5px;line-height:8.5px;color:#f2f2f2;font-weight:bold;white-space:pre;transform:scaleX(0.8290);transform-origin:0 0;">DASHBOARD</div><div style="position:absolute;left:20.10px;top:343.85px;font-size:8.5px;line-height:8.5px;color:#f2f2f2;font-weight:bold;white-space:pre;transform:scaleX(0.8165);transform-origin:0 0;">INSTRUÇÕES</div><div style="position:absolute;left:185.00px;top:136.50px;font-size:8.2px;line-height:8.2px;color:#f2f2f2;font-weight:bold;white-space:pre;transform:scaleX(0.8305);transform-origin:0 0;">GERAL</div><div style="position:absolute;left:257.00px;top:136.50px;font-size:8.2px;line-height:8.2px;color:#f2f2f2;font-weight:bold;white-space:pre;transform:scaleX(0.8718);transform-origin:0 0;">POR COMBUSTÍVEL</div><div style="position:absolute;left:341.7px;top:130.2px;width:94.9px;height:19.1px;background:#ffffff;border-radius:3px"></div><div style="position:absolute;left:364.90px;top:136.50px;font-size:8.2px;line-height:8.2px;color:#1a1a1a;font-weight:bold;white-space:pre;transform:scaleX(0.8527);transform-origin:0 0;">POR VEÍCULO</div><svg style="position:absolute;left:14px;top:124px" width="60" height="58" viewBox="14 124 60 58" fill="none"><rect x="63.86" y="146.60" width="6.74" height="3.6" rx="1.3" fill="#151515"/><path d="M65.25 148.40h3.15" stroke="#777" stroke-width="0.8"/><path d="M55.8 132.8 H64.37 L68.40 138.85 V147.2 H55.8 Z" fill="#d9434f" stroke="#151515" stroke-width="1.5" stroke-linejoin="round"/><path d="M57.56 135.40 H63.36 L64.87 138.80 H57.56 Z" fill="#cfe8f5" stroke="#151515" stroke-width="1" stroke-linejoin="round"/><path d="M56.40 141.73 h3.78" stroke="#151515" stroke-width="0.9" opacity="0.7"/><rect x="23.5" y="126.6" width="32.2" height="14.4" fill="#5bbde6" stroke="#151515" stroke-width="1.4"/><path d="M26.70 128.79999999999998 v10.0" stroke="#151515" stroke-width="1.0"/><path d="M30.44 128.79999999999998 v10.0" stroke="#151515" stroke-width="1.0"/><path d="M34.19 128.79999999999998 v10.0" stroke="#151515" stroke-width="1.0"/><path d="M37.93 128.79999999999998 v10.0" stroke="#151515" stroke-width="1.0"/><path d="M41.67 128.79999999999998 v10.0" stroke="#151515" stroke-width="1.0"/><path d="M45.41 128.79999999999998 v10.0" stroke="#151515" stroke-width="1.0"/><path d="M49.16 128.79999999999998 v10.0" stroke="#151515" stroke-width="1.0"/><path d="M52.90 128.79999999999998 v10.0" stroke="#151515" stroke-width="1.0"/><rect x="60.66" y="159.90" width="6.74" height="3.6" rx="1.3" fill="#151515"/><path d="M62.05 161.70h3.15" stroke="#777" stroke-width="0.8"/><path d="M52.6 146.4 H61.17 L65.20 152.32 V160.5 H52.6 Z" fill="#e7b54d" stroke="#151515" stroke-width="1.5" stroke-linejoin="round"/><path d="M54.36 149.00 H60.16 L61.67 152.40 H54.36 Z" fill="#cfe8f5" stroke="#151515" stroke-width="1" stroke-linejoin="round"/><path d="M53.20 155.14 h3.78" stroke="#151515" stroke-width="0.9" opacity="0.7"/><rect x="20.5" y="140.4" width="32" height="13.6" fill="#d6d6d6" stroke="#151515" stroke-width="1.4"/><path d="M23.70 142.6 v9.2" stroke="#151515" stroke-width="1.0"/><path d="M27.41 142.6 v9.2" stroke="#151515" stroke-width="1.0"/><path d="M31.13 142.6 v9.2" stroke="#151515" stroke-width="1.0"/><path d="M34.84 142.6 v9.2" stroke="#151515" stroke-width="1.0"/><path d="M38.56 142.6 v9.2" stroke="#151515" stroke-width="1.0"/><path d="M42.27 142.6 v9.2" stroke="#151515" stroke-width="1.0"/><path d="M45.99 142.6 v9.2" stroke="#151515" stroke-width="1.0"/><path d="M49.70 142.6 v9.2" stroke="#151515" stroke-width="1.0"/><rect x="57.89" y="173.20" width="6.81" height="3.6" rx="1.3" fill="#151515"/><path d="M59.30 175.00h3.20" stroke="#777" stroke-width="0.8"/><path d="M49.7 160 H58.40 L62.50 165.80 V173.8 H49.7 Z" fill="#d9434f" stroke="#151515" stroke-width="1.5" stroke-linejoin="round"/><path d="M51.49 162.60 H57.38 L58.92 166.00 H51.49 Z" fill="#cfe8f5" stroke="#151515" stroke-width="1" stroke-linejoin="round"/><path d="M50.30 168.56 h3.84" stroke="#151515" stroke-width="0.9" opacity="0.7"/><rect x="16.9" y="154" width="32.8" height="20.6" fill="#5bbde6" stroke="#151515" stroke-width="1.4"/><path d="M20.10 156.2 v16.200000000000003" stroke="#151515" stroke-width="1.0"/><path d="M23.93 156.2 v16.200000000000003" stroke="#151515" stroke-width="1.0"/><path d="M27.76 156.2 v16.200000000000003" stroke="#151515" stroke-width="1.0"/><path d="M31.59 156.2 v16.200000000000003" stroke="#151515" stroke-width="1.0"/><path d="M35.41 156.2 v16.200000000000003" stroke="#151515" stroke-width="1.0"/><path d="M39.24 156.2 v16.200000000000003" stroke="#151515" stroke-width="1.0"/><path d="M43.07 156.2 v16.200000000000003" stroke="#151515" stroke-width="1.0"/><path d="M46.90 156.2 v16.200000000000003" stroke="#151515" stroke-width="1.0"/><path d="M17 176.8h47.5" stroke="#151515" stroke-width="2.8" stroke-linecap="round"/><path d="M18.5 176.8h44" stroke="#6d6d6d" stroke-width="0.9"/><circle cx="22.6" cy="176.8" r="3.7" fill="#333" stroke="#151515" stroke-width="1.6"/><circle cx="22.6" cy="176.8" r="1.9" fill="none" stroke="#8d8d8d" stroke-width="0.9"/><circle cx="22.6" cy="176.8" r="0.7" fill="#151515"/><circle cx="32.6" cy="176.8" r="3.7" fill="#333" stroke="#151515" stroke-width="1.6"/><circle cx="32.6" cy="176.8" r="1.9" fill="none" stroke="#8d8d8d" stroke-width="0.9"/><circle cx="32.6" cy="176.8" r="0.7" fill="#151515"/><circle cx="55.7" cy="176.8" r="3.7" fill="#333" stroke="#151515" stroke-width="1.6"/><circle cx="55.7" cy="176.8" r="1.9" fill="none" stroke="#8d8d8d" stroke-width="0.9"/><circle cx="55.7" cy="176.8" r="0.7" fill="#151515"/></svg><div style="position:absolute;left:130.8px;top:166.3px;width:63.2px;height:24.7px;background:#595959;"></div><div style="position:absolute;left:145.30px;top:169.25px;font-size:7.3px;line-height:7.3px;color:#e8e8e8;font-weight:bold;white-space:pre;">Selecione o</div><div style="position:absolute;left:158.00px;top:180.95px;font-size:7.3px;line-height:7.3px;color:#e8e8e8;font-weight:bold;white-space:pre;transform:scaleX(1.0155);transform-origin:0 0;">veículo:</div><div style="position:absolute;left:194px;top:166.3px;width:175.4px;height:24.7px;background:#fff;border:1px solid #dedede;box-sizing:border-box"></div><div style="position:absolute;left:203.70px;top:174.00px;font-size:8.8px;line-height:8.8px;color:#2e2e2e;font-weight:normal;white-space:pre;transform:scaleX(0.9024);transform-origin:0 0;">Caminhão - 4656</div><div style="position:absolute;left:195.9px;top:198.9px;width:56.4px;height:21.8px;background:#595959;"></div><div style="position:absolute;left:203.60px;top:204.55px;font-size:9.5px;line-height:9.5px;color:#f2f2f2;font-weight:bold;white-space:pre;transform:scaleX(0.9260);transform-origin:0 0;">Janeiro</div><div style="position:absolute;left:254.10000000000002px;top:198.9px;width:56.4px;height:21.8px;background:#595959;"></div><div style="position:absolute;left:261.80px;top:204.55px;font-size:9.5px;line-height:9.5px;color:#f2f2f2;font-weight:bold;white-space:pre;transform:scaleX(0.9260);transform-origin:0 0;">Fevereiro</div><div style="position:absolute;left:312.3px;top:198.9px;width:56.4px;height:21.8px;background:#595959;"></div><div style="position:absolute;left:320.00px;top:204.55px;font-size:9.5px;line-height:9.5px;color:#f2f2f2;font-weight:bold;white-space:pre;transform:scaleX(0.9260);transform-origin:0 0;">Março</div><div style="position:absolute;left:370.50000000000006px;top:198.9px;width:56.4px;height:21.8px;background:#595959;"></div><div style="position:absolute;left:378.20px;top:204.55px;font-size:9.5px;line-height:9.5px;color:#f2f2f2;font-weight:bold;white-space:pre;transform:scaleX(0.9260);transform-origin:0 0;">Abril</div><div style="position:absolute;left:428.7px;top:198.9px;width:56.4px;height:21.8px;background:#595959;"></div><div style="position:absolute;left:436.40px;top:204.55px;font-size:9.5px;line-height:9.5px;color:#f2f2f2;font-weight:bold;white-space:pre;transform:scaleX(0.9260);transform-origin:0 0;">Maio</div><div style="position:absolute;left:486.90000000000003px;top:198.9px;width:56.4px;height:21.8px;background:#595959;"></div><div style="position:absolute;left:494.60px;top:204.55px;font-size:9.5px;line-height:9.5px;color:#f2f2f2;font-weight:bold;white-space:pre;transform:scaleX(0.9260);transform-origin:0 0;">Junho</div><div style="position:absolute;left:545.1px;top:198.9px;width:56.4px;height:21.8px;background:#595959;"></div><div style="position:absolute;left:552.80px;top:204.55px;font-size:9.5px;line-height:9.5px;color:#f2f2f2;font-weight:bold;white-space:pre;transform:scaleX(0.9260);transform-origin:0 0;">Julho</div><div style="position:absolute;left:603.3px;top:198.9px;width:56.4px;height:21.8px;background:#595959;"></div><div style="position:absolute;left:611.00px;top:204.55px;font-size:9.5px;line-height:9.5px;color:#f2f2f2;font-weight:bold;white-space:pre;transform:scaleX(0.9260);transform-origin:0 0;">Agosto</div><div style="position:absolute;left:661.5px;top:198.9px;width:56.4px;height:21.8px;background:#595959;"></div><div style="position:absolute;left:669.20px;top:204.55px;font-size:9.5px;line-height:9.5px;color:#f2f2f2;font-weight:bold;white-space:pre;transform:scaleX(0.9260);transform-origin:0 0;">Setembro</div><div style="position:absolute;left:719.7px;top:198.9px;width:56.4px;height:21.8px;background:#595959;"></div><div style="position:absolute;left:727.40px;top:204.55px;font-size:9.5px;line-height:9.5px;color:#f2f2f2;font-weight:bold;white-space:pre;transform:scaleX(0.9260);transform-origin:0 0;">Outubro</div><div style="position:absolute;left:777.9px;top:198.9px;width:56.4px;height:21.8px;background:#595959;"></div><div style="position:absolute;left:785.60px;top:204.55px;font-size:9.5px;line-height:9.5px;color:#f2f2f2;font-weight:bold;white-space:pre;transform:scaleX(0.9260);transform-origin:0 0;">Novembro</div><div style="position:absolute;left:836.1px;top:198.9px;width:56.4px;height:21.8px;background:#595959;"></div><div style="position:absolute;left:843.80px;top:204.55px;font-size:9.5px;line-height:9.5px;color:#f2f2f2;font-weight:bold;white-space:pre;transform:scaleX(0.9260);transform-origin:0 0;">Dezembro</div><div style="position:absolute;left:894.3000000000001px;top:198.9px;width:56.4px;height:21.8px;background:#595959;"></div><div style="position:absolute;left:902.00px;top:204.55px;font-size:9.5px;line-height:9.5px;color:#f2f2f2;font-weight:bold;white-space:pre;transform:scaleX(0.9260);transform-origin:0 0;">Total</div><div style="position:absolute;left:194.6px;top:221.3px;width:699.7px;height:184.5px;background:#d9d9d9;"></div><div style="position:absolute;left:252.60000000000002px;top:221.3px;width:0.9px;height:184.5px;background:#f4f4f4;"></div><div style="position:absolute;left:310.8px;top:221.3px;width:0.9px;height:184.5px;background:#f4f4f4;"></div><div style="position:absolute;left:369.00000000000006px;top:221.3px;width:0.9px;height:184.5px;background:#f4f4f4;"></div><div style="position:absolute;left:427.2px;top:221.3px;width:0.9px;height:184.5px;background:#f4f4f4;"></div><div style="position:absolute;left:485.40000000000003px;top:221.3px;width:0.9px;height:184.5px;background:#f4f4f4;"></div><div style="position:absolute;left:543.6px;top:221.3px;width:0.9px;height:184.5px;background:#f4f4f4;"></div><div style="position:absolute;left:601.8px;top:221.3px;width:0.9px;height:184.5px;background:#f4f4f4;"></div><div style="position:absolute;left:660.0px;top:221.3px;width:0.9px;height:184.5px;background:#f4f4f4;"></div><div style="position:absolute;left:718.2px;top:221.3px;width:0.9px;height:184.5px;background:#f4f4f4;"></div><div style="position:absolute;left:776.4px;top:221.3px;width:0.9px;height:184.5px;background:#f4f4f4;"></div><div style="position:absolute;left:834.6px;top:221.3px;width:0.9px;height:184.5px;background:#f4f4f4;"></div><div style="position:absolute;left:195.1px;top:251.6px;width:699.2px;height:0.9px;background:#f4f4f4;"></div><div style="position:absolute;left:195.1px;top:282.29999999999995px;width:699.2px;height:0.9px;background:#f4f4f4;"></div><div style="position:absolute;left:195.1px;top:313.2px;width:699.2px;height:0.9px;background:#f4f4f4;"></div><div style="position:absolute;left:195.1px;top:343.9px;width:699.2px;height:0.9px;background:#f4f4f4;"></div><div style="position:absolute;left:195.1px;top:374.4px;width:699.2px;height:0.9px;background:#f4f4f4;"></div><div style="position:absolute;left:130.8px;top:222.70000000000002px;width:63.2px;height:28.199999999999978px;background:#595959;"></div><div style="position:absolute;left:894.0000000000001px;top:222.70000000000002px;width:56.7px;height:28.199999999999978px;background:#595959;"></div><div style="position:absolute;left:138.50px;top:225.70px;font-size:9.5px;line-height:9.5px;color:#f2f2f2;font-weight:bold;white-space:pre;transform:scaleX(0.9144);transform-origin:0 0;">Valor</div><div style="position:absolute;left:138.50px;top:237.50px;font-size:9.5px;line-height:9.5px;color:#f2f2f2;font-weight:bold;white-space:pre;transform:scaleX(0.9145);transform-origin:0 0;">abastecido</div><div style="position:absolute;left:130.8px;top:253.6px;width:63.2px;height:27.99999999999999px;background:#595959;"></div><div style="position:absolute;left:894.0000000000001px;top:253.6px;width:56.7px;height:27.99999999999999px;background:#595959;"></div><div style="position:absolute;left:138.50px;top:256.50px;font-size:9.5px;line-height:9.5px;color:#f2f2f2;font-weight:bold;white-space:pre;transform:scaleX(0.9145);transform-origin:0 0;">Preço médio</div><div style="position:absolute;left:138.50px;top:268.30px;font-size:9.5px;line-height:9.5px;color:#f2f2f2;font-weight:bold;white-space:pre;transform:scaleX(0.9145);transform-origin:0 0;">por litro</div><div style="position:absolute;left:130.8px;top:284.29999999999995px;width:63.2px;height:28.200000000000035px;background:#595959;"></div><div style="position:absolute;left:894.0000000000001px;top:284.29999999999995px;width:56.7px;height:28.200000000000035px;background:#595959;"></div><div style="position:absolute;left:138.50px;top:287.30px;font-size:9.5px;line-height:9.5px;color:#f2f2f2;font-weight:bold;white-space:pre;transform:scaleX(0.9145);transform-origin:0 0;">Litros</div><div style="position:absolute;left:138.50px;top:299.10px;font-size:9.5px;line-height:9.5px;color:#f2f2f2;font-weight:bold;white-space:pre;transform:scaleX(0.9145);transform-origin:0 0;">abastecidos</div><div style="position:absolute;left:130.8px;top:315.2px;width:63.2px;height:27.99999999999999px;background:#595959;"></div><div style="position:absolute;left:894.0000000000001px;top:315.2px;width:56.7px;height:27.99999999999999px;background:#595959;"></div><div style="position:absolute;left:138.90px;top:324.20px;font-size:9.5px;line-height:9.5px;color:#f2f2f2;font-weight:bold;white-space:pre;transform:scaleX(0.8780);transform-origin:0 0;">Kms rodados</div><div style="position:absolute;left:130.8px;top:345.9px;width:63.2px;height:27.8px;background:#595959;"></div><div style="position:absolute;left:894.0000000000001px;top:345.9px;width:56.7px;height:27.8px;background:#595959;"></div><div style="position:absolute;left:138.50px;top:348.70px;font-size:9.5px;line-height:9.5px;color:#f2f2f2;font-weight:bold;white-space:pre;transform:scaleX(0.9145);transform-origin:0 0;">Média de km</div><div style="position:absolute;left:138.50px;top:360.50px;font-size:9.5px;line-height:9.5px;color:#f2f2f2;font-weight:bold;white-space:pre;transform:scaleX(0.9145);transform-origin:0 0;">por litro</div><div style="position:absolute;left:130.8px;top:376.4px;width:63.2px;height:28.100000000000012px;background:#595959;"></div><div style="position:absolute;left:894.0000000000001px;top:376.4px;width:56.7px;height:28.100000000000012px;background:#595959;"></div><div style="position:absolute;left:138.50px;top:379.35px;font-size:9.5px;line-height:9.5px;color:#f2f2f2;font-weight:bold;white-space:pre;transform:scaleX(0.9145);transform-origin:0 0;">Preço por</div><div style="position:absolute;left:138.50px;top:391.15px;font-size:9.5px;line-height:9.5px;color:#f2f2f2;font-weight:bold;white-space:pre;transform:scaleX(0.9145);transform-origin:0 0;">km rodado</div><svg style="position:absolute;left:893.9px;top:252.8px" width="3" height="3" viewBox="0 0 3 3" fill="none"><path d="M0 0h2.5l-2.5 2.5z" fill="#1e8a3c"/></svg><div style="position:absolute;left:205.60px;top:232.60px;font-size:8.5px;line-height:8.5px;color:#262626;font-weight:normal;white-space:pre;transform:scaleX(0.9412);transform-origin:0 0;">R$</div><div style="position:absolute;left:217.86px;top:232.60px;font-size:8.5px;line-height:8.5px;color:#262626;font-weight:normal;white-space:pre;transform:scaleX(0.9412);transform-origin:0 0;">1.200,00</div><div style="position:absolute;left:263.80px;top:232.60px;font-size:8.5px;line-height:8.5px;color:#262626;font-weight:normal;white-space:pre;transform:scaleX(0.9412);transform-origin:0 0;">R$</div><div style="position:absolute;left:282.73px;top:232.60px;font-size:8.5px;line-height:8.5px;color:#262626;font-weight:normal;white-space:pre;transform:scaleX(0.9412);transform-origin:0 0;">700,00</div><div style="position:absolute;left:322.00px;top:232.60px;font-size:8.5px;line-height:8.5px;color:#262626;font-weight:normal;white-space:pre;transform:scaleX(0.9412);transform-origin:0 0;">R$</div><div style="position:absolute;left:340.93px;top:232.60px;font-size:8.5px;line-height:8.5px;color:#262626;font-weight:normal;white-space:pre;transform:scaleX(0.9412);transform-origin:0 0;">850,00</div><div style="position:absolute;left:380.20px;top:232.60px;font-size:8.5px;line-height:8.5px;color:#262626;font-weight:normal;white-space:pre;transform:scaleX(0.9412);transform-origin:0 0;">R$</div><div style="position:absolute;left:416.24px;top:232.60px;font-size:8.5px;line-height:8.5px;color:#262626;font-weight:normal;white-space:pre;transform:scaleX(0.9412);transform-origin:0 0;">-</div><div style="position:absolute;left:438.40px;top:232.60px;font-size:8.5px;line-height:8.5px;color:#262626;font-weight:normal;white-space:pre;transform:scaleX(0.9412);transform-origin:0 0;">R$</div><div style="position:absolute;left:474.44px;top:232.60px;font-size:8.5px;line-height:8.5px;color:#262626;font-weight:normal;white-space:pre;transform:scaleX(0.9412);transform-origin:0 0;">-</div><div style="position:absolute;left:496.60px;top:232.60px;font-size:8.5px;line-height:8.5px;color:#262626;font-weight:normal;white-space:pre;transform:scaleX(0.9412);transform-origin:0 0;">R$</div><div style="position:absolute;left:532.64px;top:232.60px;font-size:8.5px;line-height:8.5px;color:#262626;font-weight:normal;white-space:pre;transform:scaleX(0.9412);transform-origin:0 0;">-</div><div style="position:absolute;left:554.80px;top:232.60px;font-size:8.5px;line-height:8.5px;color:#262626;font-weight:normal;white-space:pre;transform:scaleX(0.9412);transform-origin:0 0;">R$</div><div style="position:absolute;left:590.84px;top:232.60px;font-size:8.5px;line-height:8.5px;color:#262626;font-weight:normal;white-space:pre;transform:scaleX(0.9412);transform-origin:0 0;">-</div><div style="position:absolute;left:613.00px;top:232.60px;font-size:8.5px;line-height:8.5px;color:#262626;font-weight:normal;white-space:pre;transform:scaleX(0.9412);transform-origin:0 0;">R$</div><div style="position:absolute;left:649.04px;top:232.60px;font-size:8.5px;line-height:8.5px;color:#262626;font-weight:normal;white-space:pre;transform:scaleX(0.9412);transform-origin:0 0;">-</div><div style="position:absolute;left:671.20px;top:232.60px;font-size:8.5px;line-height:8.5px;color:#262626;font-weight:normal;white-space:pre;transform:scaleX(0.9412);transform-origin:0 0;">R$</div><div style="position:absolute;left:707.24px;top:232.60px;font-size:8.5px;line-height:8.5px;color:#262626;font-weight:normal;white-space:pre;transform:scaleX(0.9412);transform-origin:0 0;">-</div><div style="position:absolute;left:729.40px;top:232.60px;font-size:8.5px;line-height:8.5px;color:#262626;font-weight:normal;white-space:pre;transform:scaleX(0.9412);transform-origin:0 0;">R$</div><div style="position:absolute;left:765.44px;top:232.60px;font-size:8.5px;line-height:8.5px;color:#262626;font-weight:normal;white-space:pre;transform:scaleX(0.9412);transform-origin:0 0;">-</div><div style="position:absolute;left:787.60px;top:232.60px;font-size:8.5px;line-height:8.5px;color:#262626;font-weight:normal;white-space:pre;transform:scaleX(0.9412);transform-origin:0 0;">R$</div><div style="position:absolute;left:823.64px;top:232.60px;font-size:8.5px;line-height:8.5px;color:#262626;font-weight:normal;white-space:pre;transform:scaleX(0.9412);transform-origin:0 0;">-</div><div style="position:absolute;left:845.80px;top:232.60px;font-size:8.5px;line-height:8.5px;color:#262626;font-weight:normal;white-space:pre;transform:scaleX(0.9412);transform-origin:0 0;">R$</div><div style="position:absolute;left:881.84px;top:232.60px;font-size:8.5px;line-height:8.5px;color:#262626;font-weight:normal;white-space:pre;transform:scaleX(0.9412);transform-origin:0 0;">-</div><div style="position:absolute;left:904.30px;top:232.60px;font-size:8.5px;line-height:8.5px;color:#f2f2f2;font-weight:normal;white-space:pre;transform:scaleX(0.9412);transform-origin:0 0;">R$</div><div style="position:absolute;left:916.96px;top:232.60px;font-size:8.5px;line-height:8.5px;color:#f2f2f2;font-weight:normal;white-space:pre;transform:scaleX(0.9412);transform-origin:0 0;">2.750,00</div><div style="position:absolute;left:205.60px;top:263.40px;font-size:8.5px;line-height:8.5px;color:#262626;font-weight:normal;white-space:pre;transform:scaleX(0.9412);transform-origin:0 0;">R$</div><div style="position:absolute;left:233.43px;top:263.40px;font-size:8.5px;line-height:8.5px;color:#262626;font-weight:normal;white-space:pre;transform:scaleX(0.9412);transform-origin:0 0;">5,75</div><div style="position:absolute;left:263.80px;top:263.40px;font-size:8.5px;line-height:8.5px;color:#262626;font-weight:normal;white-space:pre;transform:scaleX(0.9412);transform-origin:0 0;">R$</div><div style="position:absolute;left:291.63px;top:263.40px;font-size:8.5px;line-height:8.5px;color:#262626;font-weight:normal;white-space:pre;transform:scaleX(0.9412);transform-origin:0 0;">6,30</div><div style="position:absolute;left:322.00px;top:263.40px;font-size:8.5px;line-height:8.5px;color:#262626;font-weight:normal;white-space:pre;transform:scaleX(0.9412);transform-origin:0 0;">R$</div><div style="position:absolute;left:349.83px;top:263.40px;font-size:8.5px;line-height:8.5px;color:#262626;font-weight:normal;white-space:pre;transform:scaleX(0.9412);transform-origin:0 0;">6,60</div><div style="position:absolute;left:380.20px;top:263.40px;font-size:8.5px;line-height:8.5px;color:#262626;font-weight:normal;white-space:pre;transform:scaleX(0.9412);transform-origin:0 0;">R$</div><div style="position:absolute;left:416.24px;top:263.40px;font-size:8.5px;line-height:8.5px;color:#262626;font-weight:normal;white-space:pre;transform:scaleX(0.9412);transform-origin:0 0;">-</div><div style="position:absolute;left:438.40px;top:263.40px;font-size:8.5px;line-height:8.5px;color:#262626;font-weight:normal;white-space:pre;transform:scaleX(0.9412);transform-origin:0 0;">R$</div><div style="position:absolute;left:474.44px;top:263.40px;font-size:8.5px;line-height:8.5px;color:#262626;font-weight:normal;white-space:pre;transform:scaleX(0.9412);transform-origin:0 0;">-</div><div style="position:absolute;left:496.60px;top:263.40px;font-size:8.5px;line-height:8.5px;color:#262626;font-weight:normal;white-space:pre;transform:scaleX(0.9412);transform-origin:0 0;">R$</div><div style="position:absolute;left:532.64px;top:263.40px;font-size:8.5px;line-height:8.5px;color:#262626;font-weight:normal;white-space:pre;transform:scaleX(0.9412);transform-origin:0 0;">-</div><div style="position:absolute;left:554.80px;top:263.40px;font-size:8.5px;line-height:8.5px;color:#262626;font-weight:normal;white-space:pre;transform:scaleX(0.9412);transform-origin:0 0;">R$</div><div style="position:absolute;left:590.84px;top:263.40px;font-size:8.5px;line-height:8.5px;color:#262626;font-weight:normal;white-space:pre;transform:scaleX(0.9412);transform-origin:0 0;">-</div><div style="position:absolute;left:613.00px;top:263.40px;font-size:8.5px;line-height:8.5px;color:#262626;font-weight:normal;white-space:pre;transform:scaleX(0.9412);transform-origin:0 0;">R$</div><div style="position:absolute;left:649.04px;top:263.40px;font-size:8.5px;line-height:8.5px;color:#262626;font-weight:normal;white-space:pre;transform:scaleX(0.9412);transform-origin:0 0;">-</div><div style="position:absolute;left:671.20px;top:263.40px;font-size:8.5px;line-height:8.5px;color:#262626;font-weight:normal;white-space:pre;transform:scaleX(0.9412);transform-origin:0 0;">R$</div><div style="position:absolute;left:707.24px;top:263.40px;font-size:8.5px;line-height:8.5px;color:#262626;font-weight:normal;white-space:pre;transform:scaleX(0.9412);transform-origin:0 0;">-</div><div style="position:absolute;left:729.40px;top:263.40px;font-size:8.5px;line-height:8.5px;color:#262626;font-weight:normal;white-space:pre;transform:scaleX(0.9412);transform-origin:0 0;">R$</div><div style="position:absolute;left:765.44px;top:263.40px;font-size:8.5px;line-height:8.5px;color:#262626;font-weight:normal;white-space:pre;transform:scaleX(0.9412);transform-origin:0 0;">-</div><div style="position:absolute;left:787.60px;top:263.40px;font-size:8.5px;line-height:8.5px;color:#262626;font-weight:normal;white-space:pre;transform:scaleX(0.9412);transform-origin:0 0;">R$</div><div style="position:absolute;left:823.64px;top:263.40px;font-size:8.5px;line-height:8.5px;color:#262626;font-weight:normal;white-space:pre;transform:scaleX(0.9412);transform-origin:0 0;">-</div><div style="position:absolute;left:845.80px;top:263.40px;font-size:8.5px;line-height:8.5px;color:#262626;font-weight:normal;white-space:pre;transform:scaleX(0.9412);transform-origin:0 0;">R$</div><div style="position:absolute;left:881.84px;top:263.40px;font-size:8.5px;line-height:8.5px;color:#262626;font-weight:normal;white-space:pre;transform:scaleX(0.9412);transform-origin:0 0;">-</div><div style="position:absolute;left:904.30px;top:263.40px;font-size:8.5px;line-height:8.5px;color:#f2f2f2;font-weight:normal;white-space:pre;transform:scaleX(0.9412);transform-origin:0 0;">R$</div><div style="position:absolute;left:932.53px;top:263.40px;font-size:8.5px;line-height:8.5px;color:#f2f2f2;font-weight:normal;white-space:pre;transform:scaleX(0.9412);transform-origin:0 0;">6,22</div><div style="position:absolute;left:203.60px;top:294.20px;font-size:8.5px;line-height:8.5px;color:#262626;font-weight:normal;white-space:pre;transform:scaleX(0.9412);transform-origin:0 0;">208,72</div><div style="position:absolute;left:261.80px;top:294.20px;font-size:8.5px;line-height:8.5px;color:#262626;font-weight:normal;white-space:pre;transform:scaleX(0.9412);transform-origin:0 0;">111,11</div><div style="position:absolute;left:320.00px;top:294.20px;font-size:8.5px;line-height:8.5px;color:#262626;font-weight:normal;white-space:pre;transform:scaleX(0.9412);transform-origin:0 0;">128,79</div><div style="position:absolute;left:378.20px;top:294.20px;font-size:8.5px;line-height:8.5px;color:#262626;font-weight:normal;white-space:pre;transform:scaleX(0.9412);transform-origin:0 0;">0,00</div><div style="position:absolute;left:436.40px;top:294.20px;font-size:8.5px;line-height:8.5px;color:#262626;font-weight:normal;white-space:pre;transform:scaleX(0.9412);transform-origin:0 0;">0,00</div><div style="position:absolute;left:494.60px;top:294.20px;font-size:8.5px;line-height:8.5px;color:#262626;font-weight:normal;white-space:pre;transform:scaleX(0.9412);transform-origin:0 0;">0,00</div><div style="position:absolute;left:552.80px;top:294.20px;font-size:8.5px;line-height:8.5px;color:#262626;font-weight:normal;white-space:pre;transform:scaleX(0.9412);transform-origin:0 0;">0,00</div><div style="position:absolute;left:611.00px;top:294.20px;font-size:8.5px;line-height:8.5px;color:#262626;font-weight:normal;white-space:pre;transform:scaleX(0.9412);transform-origin:0 0;">0,00</div><div style="position:absolute;left:669.20px;top:294.20px;font-size:8.5px;line-height:8.5px;color:#262626;font-weight:normal;white-space:pre;transform:scaleX(0.9412);transform-origin:0 0;">0,00</div><div style="position:absolute;left:727.40px;top:294.20px;font-size:8.5px;line-height:8.5px;color:#262626;font-weight:normal;white-space:pre;transform:scaleX(0.9412);transform-origin:0 0;">0,00</div><div style="position:absolute;left:785.60px;top:294.20px;font-size:8.5px;line-height:8.5px;color:#262626;font-weight:normal;white-space:pre;transform:scaleX(0.9412);transform-origin:0 0;">0,00</div><div style="position:absolute;left:843.80px;top:294.20px;font-size:8.5px;line-height:8.5px;color:#262626;font-weight:normal;white-space:pre;transform:scaleX(0.9412);transform-origin:0 0;">0,00</div><div style="position:absolute;left:902.00px;top:294.20px;font-size:8.5px;line-height:8.5px;color:#f2f2f2;font-weight:normal;white-space:pre;transform:scaleX(0.9412);transform-origin:0 0;">448,62</div><div style="position:absolute;left:203.60px;top:325.00px;font-size:8.5px;line-height:8.5px;color:#262626;font-weight:normal;white-space:pre;transform:scaleX(0.9412);transform-origin:0 0;">2.830</div><div style="position:absolute;left:261.80px;top:325.00px;font-size:8.5px;line-height:8.5px;color:#262626;font-weight:normal;white-space:pre;transform:scaleX(0.9412);transform-origin:0 0;">15</div><div style="position:absolute;left:320.00px;top:325.00px;font-size:8.5px;line-height:8.5px;color:#262626;font-weight:normal;white-space:pre;transform:scaleX(0.9412);transform-origin:0 0;">155</div><div style="position:absolute;left:378.20px;top:325.00px;font-size:8.5px;line-height:8.5px;color:#262626;font-weight:normal;white-space:pre;transform:scaleX(0.9412);transform-origin:0 0;">0</div><div style="position:absolute;left:436.40px;top:325.00px;font-size:8.5px;line-height:8.5px;color:#262626;font-weight:normal;white-space:pre;transform:scaleX(0.9412);transform-origin:0 0;">0</div><div style="position:absolute;left:494.60px;top:325.00px;font-size:8.5px;line-height:8.5px;color:#262626;font-weight:normal;white-space:pre;transform:scaleX(0.9412);transform-origin:0 0;">0</div><div style="position:absolute;left:552.80px;top:325.00px;font-size:8.5px;line-height:8.5px;color:#262626;font-weight:normal;white-space:pre;transform:scaleX(0.9412);transform-origin:0 0;">0</div><div style="position:absolute;left:611.00px;top:325.00px;font-size:8.5px;line-height:8.5px;color:#262626;font-weight:normal;white-space:pre;transform:scaleX(0.9412);transform-origin:0 0;">0</div><div style="position:absolute;left:669.20px;top:325.00px;font-size:8.5px;line-height:8.5px;color:#262626;font-weight:normal;white-space:pre;transform:scaleX(0.9412);transform-origin:0 0;">0</div><div style="position:absolute;left:727.40px;top:325.00px;font-size:8.5px;line-height:8.5px;color:#262626;font-weight:normal;white-space:pre;transform:scaleX(0.9412);transform-origin:0 0;">0</div><div style="position:absolute;left:785.60px;top:325.00px;font-size:8.5px;line-height:8.5px;color:#262626;font-weight:normal;white-space:pre;transform:scaleX(0.9412);transform-origin:0 0;">0</div><div style="position:absolute;left:843.80px;top:325.00px;font-size:8.5px;line-height:8.5px;color:#262626;font-weight:normal;white-space:pre;transform:scaleX(0.9412);transform-origin:0 0;">0</div><div style="position:absolute;left:902.00px;top:325.00px;font-size:8.5px;line-height:8.5px;color:#f2f2f2;font-weight:normal;white-space:pre;transform:scaleX(0.9412);transform-origin:0 0;">3000</div><div style="position:absolute;left:203.60px;top:355.60px;font-size:8.5px;line-height:8.5px;color:#262626;font-weight:normal;white-space:pre;transform:scaleX(0.9412);transform-origin:0 0;">15,79</div><div style="position:absolute;left:261.80px;top:355.60px;font-size:8.5px;line-height:8.5px;color:#262626;font-weight:normal;white-space:pre;transform:scaleX(0.9412);transform-origin:0 0;">0,14</div><div style="position:absolute;left:320.00px;top:355.60px;font-size:8.5px;line-height:8.5px;color:#262626;font-weight:normal;white-space:pre;transform:scaleX(0.9412);transform-origin:0 0;">1,20</div><div style="position:absolute;left:378.20px;top:355.60px;font-size:8.5px;line-height:8.5px;color:#262626;font-weight:normal;white-space:pre;transform:scaleX(0.9412);transform-origin:0 0;">0,00</div><div style="position:absolute;left:436.40px;top:355.60px;font-size:8.5px;line-height:8.5px;color:#262626;font-weight:normal;white-space:pre;transform:scaleX(0.9412);transform-origin:0 0;">0,00</div><div style="position:absolute;left:494.60px;top:355.60px;font-size:8.5px;line-height:8.5px;color:#262626;font-weight:normal;white-space:pre;transform:scaleX(0.9412);transform-origin:0 0;">0,00</div><div style="position:absolute;left:552.80px;top:355.60px;font-size:8.5px;line-height:8.5px;color:#262626;font-weight:normal;white-space:pre;transform:scaleX(0.9412);transform-origin:0 0;">0,00</div><div style="position:absolute;left:611.00px;top:355.60px;font-size:8.5px;line-height:8.5px;color:#262626;font-weight:normal;white-space:pre;transform:scaleX(0.9412);transform-origin:0 0;">0,00</div><div style="position:absolute;left:669.20px;top:355.60px;font-size:8.5px;line-height:8.5px;color:#262626;font-weight:normal;white-space:pre;transform:scaleX(0.9412);transform-origin:0 0;">0,00</div><div style="position:absolute;left:727.40px;top:355.60px;font-size:8.5px;line-height:8.5px;color:#262626;font-weight:normal;white-space:pre;transform:scaleX(0.9412);transform-origin:0 0;">0,00</div><div style="position:absolute;left:785.60px;top:355.60px;font-size:8.5px;line-height:8.5px;color:#262626;font-weight:normal;white-space:pre;transform:scaleX(0.9412);transform-origin:0 0;">0,00</div><div style="position:absolute;left:843.80px;top:355.60px;font-size:8.5px;line-height:8.5px;color:#262626;font-weight:normal;white-space:pre;transform:scaleX(0.9412);transform-origin:0 0;">0,00</div><div style="position:absolute;left:902.00px;top:355.60px;font-size:8.5px;line-height:8.5px;color:#f2f2f2;font-weight:normal;white-space:pre;transform:scaleX(0.9412);transform-origin:0 0;">5,71</div><div style="position:absolute;left:205.60px;top:386.25px;font-size:8.5px;line-height:8.5px;color:#262626;font-weight:normal;white-space:pre;transform:scaleX(0.9412);transform-origin:0 0;">R$</div><div style="position:absolute;left:233.43px;top:386.25px;font-size:8.5px;line-height:8.5px;color:#262626;font-weight:normal;white-space:pre;transform:scaleX(0.9412);transform-origin:0 0;">0,84</div><div style="position:absolute;left:263.80px;top:386.25px;font-size:8.5px;line-height:8.5px;color:#262626;font-weight:normal;white-space:pre;transform:scaleX(0.9412);transform-origin:0 0;">R$</div><div style="position:absolute;left:287.18px;top:386.25px;font-size:8.5px;line-height:8.5px;color:#262626;font-weight:normal;white-space:pre;transform:scaleX(0.9412);transform-origin:0 0;">46,67</div><div style="position:absolute;left:322.00px;top:386.25px;font-size:8.5px;line-height:8.5px;color:#262626;font-weight:normal;white-space:pre;transform:scaleX(0.9412);transform-origin:0 0;">R$</div><div style="position:absolute;left:349.83px;top:386.25px;font-size:8.5px;line-height:8.5px;color:#262626;font-weight:normal;white-space:pre;transform:scaleX(0.9412);transform-origin:0 0;">5,48</div><div style="position:absolute;left:380.20px;top:386.25px;font-size:8.5px;line-height:8.5px;color:#262626;font-weight:normal;white-space:pre;transform:scaleX(0.9412);transform-origin:0 0;">R$</div><div style="position:absolute;left:416.24px;top:386.25px;font-size:8.5px;line-height:8.5px;color:#262626;font-weight:normal;white-space:pre;transform:scaleX(0.9412);transform-origin:0 0;">-</div><div style="position:absolute;left:438.40px;top:386.25px;font-size:8.5px;line-height:8.5px;color:#262626;font-weight:normal;white-space:pre;transform:scaleX(0.9412);transform-origin:0 0;">R$</div><div style="position:absolute;left:474.44px;top:386.25px;font-size:8.5px;line-height:8.5px;color:#262626;font-weight:normal;white-space:pre;transform:scaleX(0.9412);transform-origin:0 0;">-</div><div style="position:absolute;left:496.60px;top:386.25px;font-size:8.5px;line-height:8.5px;color:#262626;font-weight:normal;white-space:pre;transform:scaleX(0.9412);transform-origin:0 0;">R$</div><div style="position:absolute;left:532.64px;top:386.25px;font-size:8.5px;line-height:8.5px;color:#262626;font-weight:normal;white-space:pre;transform:scaleX(0.9412);transform-origin:0 0;">-</div><div style="position:absolute;left:554.80px;top:386.25px;font-size:8.5px;line-height:8.5px;color:#262626;font-weight:normal;white-space:pre;transform:scaleX(0.9412);transform-origin:0 0;">R$</div><div style="position:absolute;left:590.84px;top:386.25px;font-size:8.5px;line-height:8.5px;color:#262626;font-weight:normal;white-space:pre;transform:scaleX(0.9412);transform-origin:0 0;">-</div><div style="position:absolute;left:613.00px;top:386.25px;font-size:8.5px;line-height:8.5px;color:#262626;font-weight:normal;white-space:pre;transform:scaleX(0.9412);transform-origin:0 0;">R$</div><div style="position:absolute;left:649.04px;top:386.25px;font-size:8.5px;line-height:8.5px;color:#262626;font-weight:normal;white-space:pre;transform:scaleX(0.9412);transform-origin:0 0;">-</div><div style="position:absolute;left:671.20px;top:386.25px;font-size:8.5px;line-height:8.5px;color:#262626;font-weight:normal;white-space:pre;transform:scaleX(0.9412);transform-origin:0 0;">R$</div><div style="position:absolute;left:707.24px;top:386.25px;font-size:8.5px;line-height:8.5px;color:#262626;font-weight:normal;white-space:pre;transform:scaleX(0.9412);transform-origin:0 0;">-</div><div style="position:absolute;left:729.40px;top:386.25px;font-size:8.5px;line-height:8.5px;color:#262626;font-weight:normal;white-space:pre;transform:scaleX(0.9412);transform-origin:0 0;">R$</div><div style="position:absolute;left:765.44px;top:386.25px;font-size:8.5px;line-height:8.5px;color:#262626;font-weight:normal;white-space:pre;transform:scaleX(0.9412);transform-origin:0 0;">-</div><div style="position:absolute;left:787.60px;top:386.25px;font-size:8.5px;line-height:8.5px;color:#262626;font-weight:normal;white-space:pre;transform:scaleX(0.9412);transform-origin:0 0;">R$</div><div style="position:absolute;left:823.64px;top:386.25px;font-size:8.5px;line-height:8.5px;color:#262626;font-weight:normal;white-space:pre;transform:scaleX(0.9412);transform-origin:0 0;">-</div><div style="position:absolute;left:845.80px;top:386.25px;font-size:8.5px;line-height:8.5px;color:#262626;font-weight:normal;white-space:pre;transform:scaleX(0.9412);transform-origin:0 0;">R$</div><div style="position:absolute;left:881.84px;top:386.25px;font-size:8.5px;line-height:8.5px;color:#262626;font-weight:normal;white-space:pre;transform:scaleX(0.9412);transform-origin:0 0;">-</div><div style="position:absolute;left:904.30px;top:386.25px;font-size:8.5px;line-height:8.5px;color:#f2f2f2;font-weight:normal;white-space:pre;transform:scaleX(0.9412);transform-origin:0 0;">R$</div><div style="position:absolute;left:928.08px;top:386.25px;font-size:8.5px;line-height:8.5px;color:#f2f2f2;font-weight:normal;white-space:pre;transform:scaleX(0.9412);transform-origin:0 0;">17,66</div>
</body></html>
